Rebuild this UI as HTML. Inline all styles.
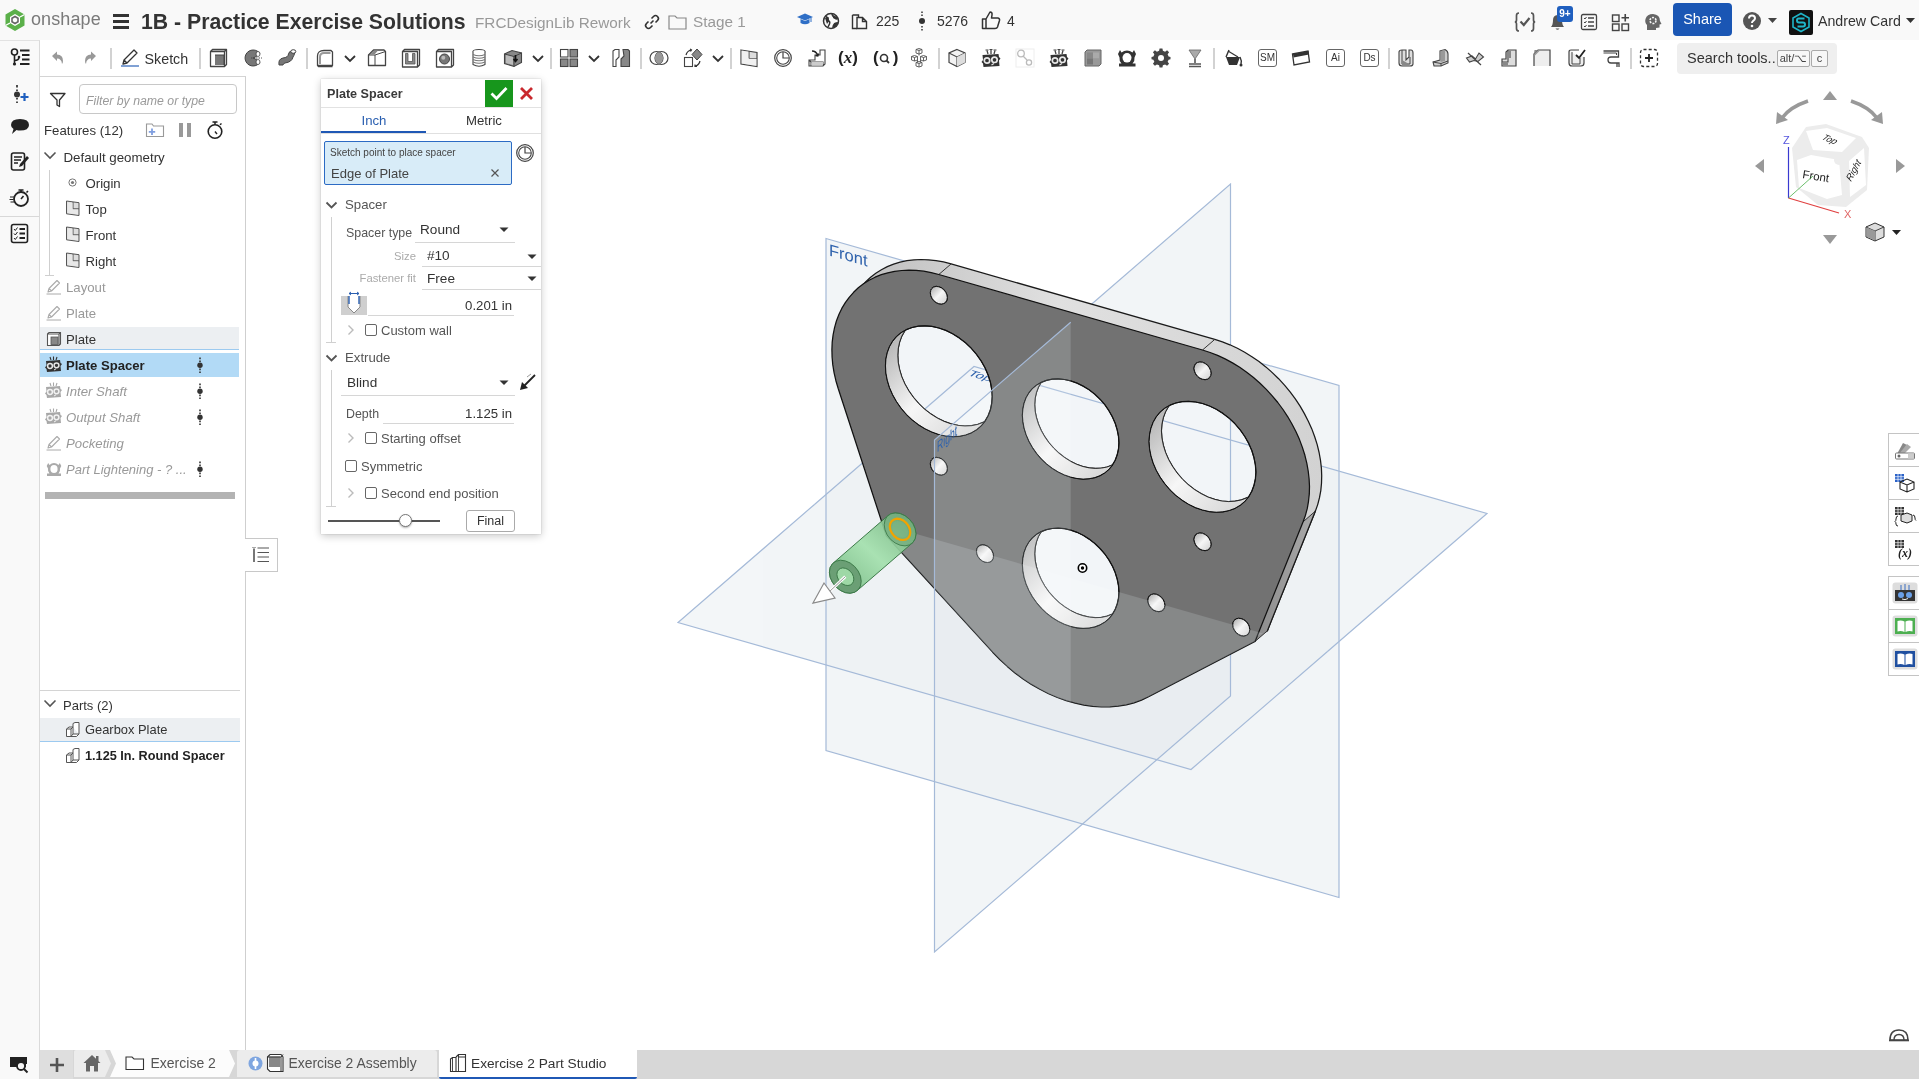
<!DOCTYPE html>
<html><head><meta charset="utf-8">
<style>
*{box-sizing:border-box}
html,body{margin:0;padding:0}
body{width:1919px;height:1079px;overflow:hidden;position:relative;background:#fff;font-family:"Liberation Sans",sans-serif;color:#333}
.a{position:absolute}
.t{position:absolute;white-space:nowrap;line-height:1}
svg{position:absolute;overflow:visible}
#hdr{left:0;top:0;width:1919px;height:40px;background:#f9f9f9}
#lcol{left:0;top:40px;width:40px;height:1039px;background:#f9f9f9;border-right:1px solid #dadada;border-top:1px solid #e2e2e2}
#tb{left:40px;top:40px;width:1879px;height:37px;background:#fff}
#fp{left:40px;top:76px;width:206px;height:974px;background:#fff;border-right:1px solid #cfcfcf;border-top:1px solid #d4d4d4}
#tabs{left:40px;top:1050px;width:1879px;height:29px;background:#d7d7d7}
.sep{position:absolute;top:48px;width:2px;height:21px;background:#d2d2d2}
.row{position:absolute;left:40px;width:199px;height:24px}
.ft{font-size:13.5px;color:#333}
.gray{color:#999}
.it{font-style:italic}
</style></head><body>
<div id="hdr" class="a">
<svg style="left:4px;top:8px" width="22" height="24" viewBox="0 0 22 24"><path d="M11 1 L20.5 6.5 L20.5 17.5 L11 23 L1.5 17.5 L1.5 6.5 Z" fill="#5bb04a"/><path d="M11 6 L16 9 L16 15 L11 18 L6 15 L6 9 Z" fill="#fff"/><path d="M11 8.5 L14 10.3 L14 13.8 L11 15.5 L8 13.8 L8 10.3 Z" fill="none" stroke="#666" stroke-width="1.6"/><path d="M16 9 L20.5 6.5 M6 15 L1.5 17.5" stroke="#fff" stroke-width="1.4"/></svg>
<div class="t" style="left:31px;top:10px;font-size:18px;color:#7a7a7a;letter-spacing:0.1px">onshape</div>
<div class="a" style="left:113px;top:14px;width:16px;height:3px;background:#333"></div>
<div class="a" style="left:113px;top:20px;width:16px;height:3px;background:#333"></div>
<div class="a" style="left:113px;top:26px;width:16px;height:3px;background:#333"></div>
<div class="t" style="left:141px;top:11px;font-size:22.6px;font-weight:bold;color:#333;transform:scaleX(0.94);transform-origin:0 0">1B - Practice Exercise Solutions</div>
<div class="t" style="left:475px;top:15px;font-size:15.3px;color:#999">FRCDesignLib Rework</div>
<svg style="left:644px;top:14px" width="16" height="16" viewBox="0 0 16 16"><path d="M6.5 9.5 L9.5 6.5" stroke="#333" stroke-width="1.6"/><path d="M7.5 4.5 L9.5 2.5 A2.3 2.3 0 0 1 13.5 6.5 L11.5 8.5 M8.5 11.5 L6.5 13.5 A2.3 2.3 0 0 1 2.5 9.5 L4.5 7.5" fill="none" stroke="#333" stroke-width="1.6"/></svg>
<svg style="left:668px;top:14px" width="19" height="16" viewBox="0 0 19 16"><path d="M1 2 H7 L9 4 H18 V15 H1 Z" fill="none" stroke="#888" stroke-width="1.2"/></svg>
<div class="t" style="left:693px;top:14px;font-size:15.3px;color:#999">Stage 1</div>
<svg style="left:796px;top:12px" width="18" height="16" viewBox="0 0 18 16"><path d="M1 5 L9 1.5 L17 5 L9 8.5 Z" fill="#2f6fc6"/><path d="M4.5 7 V11 Q9 13.5 13.5 11 V7 L9 9 Z" fill="#2f6fc6"/><path d="M15 5.5 V10" stroke="#2f6fc6" stroke-width="1"/></svg>
<svg style="left:822px;top:12px" width="18" height="18" viewBox="0 0 18 18"><circle cx="9" cy="9" r="7.5" fill="none" stroke="#333" stroke-width="1.5"/><path d="M4 4.5 Q6.5 6 6 8.5 Q8.5 9.5 7.5 12 L6 15 M10 2 Q10.5 5 13 5.5 L15.5 7 M11 16 Q11 12.5 13.5 11.5 L16 11" fill="none" stroke="#333" stroke-width="1.5"/><path d="M3 6 L6.5 5 L7 9 L5 12 Z M11 3 L15 5 L14.5 8 L11 6 Z M12 11 L16 10 L14 15 L11.5 15 Z" fill="#333"/></svg>
<svg style="left:851px;top:12px" width="17" height="18" viewBox="0 0 17 18"><path d="M1.5 3 H7.5 V5 M1.5 3 V16.5 H6" fill="none" stroke="#333" stroke-width="1.4"/><path d="M6 5.5 H11.5 L15.5 9.5 V16.5 H6 Z M11.5 5.5 V9.5 H15.5" fill="none" stroke="#333" stroke-width="1.4"/></svg>
<div class="t" style="left:876px;top:14px;font-size:14px;color:#333">225</div>
<svg style="left:918px;top:11px" width="8" height="20" viewBox="0 0 8 20"><circle cx="4" cy="10" r="3" fill="#333"/><path d="M4 0.5 V5 M4 15 V19.5" stroke="#333" stroke-width="1.5" stroke-dasharray="1.6 1.4"/></svg>
<div class="t" style="left:937px;top:14px;font-size:14px;color:#333">5276</div>
<svg style="left:981px;top:10px" width="20" height="20" viewBox="0 0 20 20"><path d="M1.5 9 H5 V18.5 H1.5 Z M5 9 L9 2 Q11.5 2 11 5 L10.5 8 H17 Q19 8.5 18.5 10.5 L16.5 17 Q16 18.5 14 18.5 H5" fill="none" stroke="#333" stroke-width="1.5" stroke-linejoin="round"/></svg>
<div class="t" style="left:1007px;top:14px;font-size:14px;color:#333">4</div>
<svg style="left:1514px;top:12px" width="22" height="20" viewBox="0 0 22 20"><path d="M5 1 Q2.5 1 2.5 3.5 V8 Q2.5 10 0.8 10 Q2.5 10 2.5 12 V16.5 Q2.5 19 5 19 M17 1 Q19.5 1 19.5 3.5 V8 Q19.5 10 21.2 10 Q19.5 10 19.5 12 V16.5 Q19.5 19 17 19" fill="none" stroke="#555" stroke-width="1.7"/><path d="M6.5 9.5 L9.8 13 L15.5 6" fill="none" stroke="#555" stroke-width="2.2"/></svg>
<svg style="left:1548px;top:12px" width="20" height="20" viewBox="0 0 20 20"><path d="M3 15 Q5 13 5 8 Q5 3.5 9.5 3 Q14 3.5 14 8 Q14 13 16 15 Z" fill="#555"/><path d="M7.5 16.5 Q9.5 19 11.5 16.5" fill="#555"/></svg>
<div class="a" style="left:1557px;top:6px;width:16px;height:16px;background:#1f5fbf;border-radius:3px;color:#fff;font-size:10px;font-weight:bold;text-align:center;line-height:16px">9+</div>
<svg style="left:1580px;top:13px" width="18" height="18" viewBox="0 0 18 18"><rect x="1.5" y="1.5" width="15" height="15" rx="1.5" fill="none" stroke="#444" stroke-width="1.3"/><path d="M4 5 L5 6 L6.5 4 M4 9 L5 10 L6.5 8 M4 13 L5 14 L6.5 12" fill="none" stroke="#444" stroke-width="1"/><path d="M8 5 H14 M8 9 H14 M8 13 H14" stroke="#444" stroke-width="1.4"/></svg>
<svg style="left:1611px;top:12px" width="20" height="20" viewBox="0 0 20 20"><rect x="1.5" y="3" width="6.5" height="6.5" fill="none" stroke="#444" stroke-width="1.4"/><rect x="1.5" y="12" width="6.5" height="6.5" fill="none" stroke="#444" stroke-width="1.4"/><rect x="11" y="12" width="6.5" height="6.5" fill="none" stroke="#444" stroke-width="1.4"/><path d="M14.25 2 V9.5 M10.5 5.75 H18" stroke="#444" stroke-width="1.6"/></svg>
<svg style="left:1643px;top:12px" width="20" height="20" viewBox="0 0 20 20"><path d="M4 18 V13 Q1.5 10.5 2.5 7 Q4 2 10 2 Q17 2.5 17 9 L18.5 12 L16.5 12.5 V15.5 L13 16 V18 Z" fill="#666"/><circle cx="10" cy="8.5" r="3" fill="none" stroke="#f6f6f6" stroke-width="1.6" stroke-dasharray="2 1.2"/></svg>
<div class="a" style="left:1673px;top:3px;width:59px;height:33px;background:#1a56b4;border-radius:4px;color:#fff;font-size:14.5px;text-align:center;line-height:33px">Share</div>
<svg style="left:1742px;top:11px" width="20" height="20" viewBox="0 0 20 20"><circle cx="10" cy="10" r="9" fill="#555"/><path d="M7 7.5 Q7 4.5 10 4.5 Q13 4.5 13 7.3 Q13 9 11 10 Q10 10.6 10 12" fill="none" stroke="#fff" stroke-width="2"/><circle cx="10" cy="15" r="1.3" fill="#fff"/></svg>
<svg style="left:1768px;top:18px" width="9" height="6" viewBox="0 0 9 6"><path d="M0 0 H9 L4.5 5 Z" fill="#444"/></svg>
<div class="a" style="left:1789px;top:10px;width:24px;height:25px;background:#111;border-radius:2px"></div>
<svg style="left:1791px;top:12px" width="20" height="21" viewBox="0 0 20 21"><path d="M10 1.5 L18 6 V15 L10 19.5 L2 15 V6 Z" fill="none" stroke="#1fb5c8" stroke-width="1.6"/><path d="M13.5 6.5 H7.5 Q6 6.5 6 8.5 Q6 10.5 8 10.5 H12 Q14 10.5 14 12.5 Q14 14.5 12 14.5 H6.5" fill="none" stroke="#1fb5c8" stroke-width="2"/></svg>
<div class="t" style="left:1818px;top:14px;font-size:14.2px;color:#333">Andrew Card</div>
<svg style="left:1906px;top:18px" width="9" height="6" viewBox="0 0 9 6"><path d="M0 0 H9 L4.5 5 Z" fill="#333"/></svg>
</div>
<div id="lcol" class="a"></div>
<div id="tb" class="a"></div>
<div id="fp" class="a"></div>
<div id="tabs" class="a"></div>
<svg class="a" style="left:0;top:0" width="1919" height="1079" viewBox="0 0 1919 1079">
<defs>
<linearGradient id="wall" x1="0" y1="0" x2="1" y2="1"><stop offset="0" stop-color="#a8a8a8"/><stop offset="0.5" stop-color="#f6f6f6"/><stop offset="1" stop-color="#d0d0d0"/></linearGradient>
<linearGradient id="side" x1="0" y1="0" x2="1" y2="0"><stop offset="0" stop-color="#bcbcbc"/><stop offset="0.45" stop-color="#e0e0e0"/><stop offset="1" stop-color="#d2d2d2"/></linearGradient>
<linearGradient id="sp" x1="0" y1="1" x2="1" y2="0"><stop offset="0" stop-color="#6fb37c"/><stop offset="0.5" stop-color="#a3e0ad"/><stop offset="1" stop-color="#6fae7a"/></linearGradient>
</defs>
<clipPath id="sil"><path d="M1202.5,350 L1210.1,352.5 L1217.6,355.4 L1225.1,358.9 L1232.5,362.9 L1239.7,367.3 L1246.7,372.2 L1253.5,377.5 L1260,383.3 L1266.3,389.4 L1272.2,395.8 L1277.8,402.5 L1283,409.5 L1287.8,416.8 L1292.1,424.2 L1296,431.8 L1299.5,439.6 L1302.4,447.4 L1304.9,455.3 L1306.8,463.1 L1308.2,471 L1309.1,478.8 L1309.5,486.4 L1309.3,493.9 L1308.5,501.3 L1307.3,508.4 L1305.5,515.2 L1303.1,521.8 L1255,641.5 L1148.6,696.8 L1141.5,700.1 L1134.1,702.8 L1126.3,704.8 L1118.2,706.2 L1109.9,706.9 L1101.4,707 L1092.7,706.4 L1083.9,705.1 L1075.1,703.2 L1066.2,700.7 L1057.4,697.5 L1048.6,693.7 L1039.9,689.3 L1031.4,684.4 L1023.1,678.9 L1015,672.9 L1007.3,666.4 L999.8,659.5 L992.7,652.2 L886.3,535.9 L838.2,388.5 L835.9,380.7 L834.1,372.8 L832.8,364.9 L832.1,357.2 L831.9,349.6 L832.2,342.1 L833.1,334.8 L834.5,327.8 L836.4,321 L838.9,314.6 L841.8,308.4 L845.3,302.7 L849.2,297.3 L853.6,292.3 L858.3,287.8 L863.5,283.8 L869.1,280.3 L875.1,277.2 L881.3,274.7 L887.8,272.8 L894.6,271.3 L901.7,270.5 L908.9,270.2 L916.2,270.4 L923.7,271.2 L931.2,272.6 L938.8,274.5Z"/><path d="M1214.8,339.4 L1222.4,341.9 L1229.9,344.8 L1237.4,348.3 L1244.7,352.3 L1251.9,356.7 L1259,361.6 L1265.8,366.9 L1272.3,372.6 L1278.6,378.7 L1284.5,385.2 L1290.1,391.9 L1295.3,398.9 L1300.1,406.1 L1304.4,413.6 L1308.3,421.2 L1311.8,428.9 L1314.7,436.8 L1317.2,444.6 L1319.1,452.5 L1320.5,460.4 L1321.4,468.1 L1321.7,475.8 L1321.5,483.3 L1320.8,490.6 L1319.5,497.7 L1317.7,504.6 L1315.4,511.1 L1267.3,630.9 L1160.9,686.2 L1153.8,689.5 L1146.3,692.2 L1138.6,694.2 L1130.5,695.6 L1122.2,696.3 L1113.7,696.3 L1105,695.7 L1096.2,694.5 L1087.4,692.6 L1078.5,690 L1069.7,686.9 L1060.9,683.1 L1052.2,678.7 L1043.7,673.8 L1035.4,668.3 L1027.3,662.3 L1019.5,655.8 L1012.1,648.9 L1005,641.5 L898.6,525.2 L850.5,377.9 L848.1,370 L846.3,362.2 L845.1,354.3 L844.3,346.6 L844.1,338.9 L844.5,331.5 L845.4,324.2 L846.8,317.2 L848.7,310.4 L851.2,303.9 L854.1,297.8 L857.6,292 L861.5,286.7 L865.8,281.7 L870.6,277.2 L875.8,273.2 L881.4,269.7 L887.3,266.6 L893.6,264.1 L900.1,262.1 L906.9,260.7 L913.9,259.9 L921.1,259.5 L928.5,259.8 L936,260.6 L943.5,261.9 L951.1,263.9Z"/></clipPath>
<mask id="nosil" maskUnits="userSpaceOnUse" x="0" y="0" width="1919" height="1079"><rect x="0" y="0" width="1919" height="1079" fill="#fff"/><path d="M1202.5,350 L1210.1,352.5 L1217.6,355.4 L1225.1,358.9 L1232.5,362.9 L1239.7,367.3 L1246.7,372.2 L1253.5,377.5 L1260,383.3 L1266.3,389.4 L1272.2,395.8 L1277.8,402.5 L1283,409.5 L1287.8,416.8 L1292.1,424.2 L1296,431.8 L1299.5,439.6 L1302.4,447.4 L1304.9,455.3 L1306.8,463.1 L1308.2,471 L1309.1,478.8 L1309.5,486.4 L1309.3,493.9 L1308.5,501.3 L1307.3,508.4 L1305.5,515.2 L1303.1,521.8 L1255,641.5 L1148.6,696.8 L1141.5,700.1 L1134.1,702.8 L1126.3,704.8 L1118.2,706.2 L1109.9,706.9 L1101.4,707 L1092.7,706.4 L1083.9,705.1 L1075.1,703.2 L1066.2,700.7 L1057.4,697.5 L1048.6,693.7 L1039.9,689.3 L1031.4,684.4 L1023.1,678.9 L1015,672.9 L1007.3,666.4 L999.8,659.5 L992.7,652.2 L886.3,535.9 L838.2,388.5 L835.9,380.7 L834.1,372.8 L832.8,364.9 L832.1,357.2 L831.9,349.6 L832.2,342.1 L833.1,334.8 L834.5,327.8 L836.4,321 L838.9,314.6 L841.8,308.4 L845.3,302.7 L849.2,297.3 L853.6,292.3 L858.3,287.8 L863.5,283.8 L869.1,280.3 L875.1,277.2 L881.3,274.7 L887.8,272.8 L894.6,271.3 L901.7,270.5 L908.9,270.2 L916.2,270.4 L923.7,271.2 L931.2,272.6 L938.8,274.5Z" fill="#000"/><path d="M1214.8,339.4 L1222.4,341.9 L1229.9,344.8 L1237.4,348.3 L1244.7,352.3 L1251.9,356.7 L1259,361.6 L1265.8,366.9 L1272.3,372.6 L1278.6,378.7 L1284.5,385.2 L1290.1,391.9 L1295.3,398.9 L1300.1,406.1 L1304.4,413.6 L1308.3,421.2 L1311.8,428.9 L1314.7,436.8 L1317.2,444.6 L1319.1,452.5 L1320.5,460.4 L1321.4,468.1 L1321.7,475.8 L1321.5,483.3 L1320.8,490.6 L1319.5,497.7 L1317.7,504.6 L1315.4,511.1 L1267.3,630.9 L1160.9,686.2 L1153.8,689.5 L1146.3,692.2 L1138.6,694.2 L1130.5,695.6 L1122.2,696.3 L1113.7,696.3 L1105,695.7 L1096.2,694.5 L1087.4,692.6 L1078.5,690 L1069.7,686.9 L1060.9,683.1 L1052.2,678.7 L1043.7,673.8 L1035.4,668.3 L1027.3,662.3 L1019.5,655.8 L1012.1,648.9 L1005,641.5 L898.6,525.2 L850.5,377.9 L848.1,370 L846.3,362.2 L845.1,354.3 L844.3,346.6 L844.1,338.9 L844.5,331.5 L845.4,324.2 L846.8,317.2 L848.7,310.4 L851.2,303.9 L854.1,297.8 L857.6,292 L861.5,286.7 L865.8,281.7 L870.6,277.2 L875.8,273.2 L881.4,269.7 L887.3,266.6 L893.6,264.1 L900.1,262.1 L906.9,260.7 L913.9,259.9 L921.1,259.5 L928.5,259.8 L936,260.6 L943.5,261.9 L951.1,263.9Z" fill="#000"/></mask>
<g mask="url(#nosil)">
<path d="M826,238.5 L1339,385.5 L1339,897.5 L826,750.5Z" fill="rgba(185,205,215,0.09)"/>
<path d="M678,622.5 L1191,769.5 L1487,513.5 L974,366.5Z" fill="rgba(185,205,215,0.09)"/>
<path d="M934.5,440 L1230.5,184 L1230.5,696 L934.5,952Z" fill="rgba(185,205,215,0.09)"/>
<g opacity="0.1">
<path d="M826,238.5 L1339,385.5 L1339,897.5 L826,750.5Z" fill="rgb(185,205,215)"/>
<path d="M678,622.5 L1191,769.5 L1487,513.5 L974,366.5Z" fill="rgb(185,205,215)"/>
<path d="M934.5,440 L1230.5,184 L1230.5,696 L934.5,952Z" fill="rgb(185,205,215)"/>
</g></g>
<g clip-path="url(#sil)"><g opacity="0.2">
<path d="M826,238.5 L1339,385.5 L1339,897.5 L826,750.5Z" fill="rgb(190,206,218)"/>
<path d="M678,622.5 L1191,769.5 L1487,513.5 L974,366.5Z" fill="rgb(190,206,218)"/>
<path d="M934.5,440 L1230.5,184 L1230.5,696 L934.5,952Z" fill="rgb(190,206,218)"/>
</g></g>
<path d="M826,238.5 L1339,385.5 L1339,897.5 L826,750.5Z" fill="none" stroke="#a5bad8" stroke-width="1.2"/>
<path d="M814.2,504.7 L974,366.5 L1487,513.5 L1327.2,651.7" fill="none" stroke="#a5bad8" stroke-width="1.2"/>
<path d="M1070.7,322.2 L1230.5,184 L1230.5,696 L1070.7,834.2" fill="none" stroke="#a5bad8" stroke-width="1.2"/>
<text x="0" y="0" transform="matrix(1.002,0.287,0,1,829,255.4)" font-size="16.5" fill="#3063ad" font-family="Liberation Sans">Front</text>
<text x="0" y="0" transform="matrix(1.002,0.287,-0.578,0.5,966.8,375)" font-size="14" fill="#3063ad" font-family="Liberation Sans">Top</text>
<path d="M1214.8,339.4 L1222.4,341.9 L1229.9,344.8 L1237.4,348.3 L1244.7,352.3 L1251.9,356.7 L1259,361.6 L1265.8,366.9 L1272.3,372.6 L1278.6,378.7 L1284.5,385.2 L1290.1,391.9 L1295.3,398.9 L1300.1,406.1 L1304.4,413.6 L1308.3,421.2 L1311.8,428.9 L1314.7,436.8 L1317.2,444.6 L1319.1,452.5 L1320.5,460.4 L1321.4,468.1 L1321.7,475.8 L1321.5,483.3 L1320.8,490.6 L1319.5,497.7 L1317.7,504.6 L1315.4,511.1 L1267.3,630.9 L1160.9,686.2 L1153.8,689.5 L1146.3,692.2 L1138.6,694.2 L1130.5,695.6 L1122.2,696.3 L1113.7,696.3 L1105,695.7 L1096.2,694.5 L1087.4,692.6 L1078.5,690 L1069.7,686.9 L1060.9,683.1 L1052.2,678.7 L1043.7,673.8 L1035.4,668.3 L1027.3,662.3 L1019.5,655.8 L1012.1,648.9 L1005,641.5 L898.6,525.2 L850.5,377.9 L848.1,370 L846.3,362.2 L845.1,354.3 L844.3,346.6 L844.1,338.9 L844.5,331.5 L845.4,324.2 L846.8,317.2 L848.7,310.4 L851.2,303.9 L854.1,297.8 L857.6,292 L861.5,286.7 L865.8,281.7 L870.6,277.2 L875.8,273.2 L881.4,269.7 L887.3,266.6 L893.6,264.1 L900.1,262.1 L906.9,260.7 L913.9,259.9 L921.1,259.5 L928.5,259.8 L936,260.6 L943.5,261.9 L951.1,263.9ZM1004.5,385.9 L1004,378.8 L1002.6,371.6 L1000.4,364.4 L997.3,357.2 L993.4,350.3 L988.8,343.8 L983.6,337.7 L977.8,332.1 L971.5,327.3 L964.9,323.1 L958.1,319.8 L951.1,317.4 L944.1,315.8 L937.3,315.2 L930.7,315.6 L924.4,316.8 L918.6,319.1 L913.4,322.1 L908.8,326.1 L904.9,330.7 L901.8,336.1 L899.6,342.1 L898.2,348.5 L897.8,355.3 L898.2,362.4 L899.6,369.6 L901.8,376.9 L904.9,384 L908.8,390.9 L913.4,397.4 L918.6,403.5 L924.4,409.1 L930.7,413.9 L937.3,418.1 L944.1,421.4 L951.1,423.9 L958.1,425.4 L964.9,426 L971.5,425.7 L977.8,424.4 L983.6,422.2 L988.8,419.1 L993.4,415.1 L997.3,410.5 L1000.4,405.1 L1002.6,399.2 L1004,392.7ZM1131.2,432.2 L1130.8,425.8 L1129.5,419.3 L1127.5,412.7 L1124.7,406.3 L1121.2,400 L1117,394.1 L1112.3,388.6 L1107.1,383.6 L1101.4,379.2 L1095.4,375.5 L1089.2,372.5 L1082.9,370.2 L1076.6,368.8 L1070.5,368.3 L1064.5,368.6 L1058.8,369.8 L1053.6,371.8 L1048.8,374.6 L1044.7,378.1 L1041.2,382.3 L1038.4,387.2 L1036.4,392.6 L1035.1,398.4 L1034.7,404.6 L1035.1,411 L1036.4,417.5 L1038.4,424 L1041.2,430.5 L1044.7,436.7 L1048.8,442.6 L1053.6,448.1 L1058.8,453.1 L1064.5,457.5 L1070.5,461.3 L1076.6,464.3 L1082.9,466.5 L1089.2,467.9 L1095.4,468.4 L1101.4,468.1 L1107.1,467 L1112.3,465 L1117,462.2 L1121.2,458.6 L1124.7,454.4 L1127.5,449.6 L1129.5,444.2 L1130.8,438.3ZM1268.1,461.5 L1267.7,454.4 L1266.3,447.1 L1264.1,439.9 L1261,432.8 L1257.1,425.9 L1252.5,419.3 L1247.3,413.2 L1241.5,407.7 L1235.2,402.8 L1228.6,398.7 L1221.7,395.4 L1214.8,392.9 L1207.8,391.4 L1201,390.8 L1194.4,391.1 L1188.1,392.4 L1182.3,394.6 L1177.1,397.7 L1172.5,401.6 L1168.6,406.3 L1165.5,411.7 L1163.3,417.6 L1161.9,424.1 L1161.4,430.9 L1161.9,438 L1163.3,445.2 L1165.5,452.4 L1168.6,459.5 L1172.5,466.4 L1177.1,473 L1182.3,479.1 L1188.1,484.6 L1194.4,489.5 L1201,493.6 L1207.8,497 L1214.8,499.4 L1221.7,501 L1228.6,501.6 L1235.2,501.2 L1241.5,499.9 L1247.3,497.7 L1252.5,494.6 L1257.1,490.7 L1261,486 L1264.1,480.7 L1266.3,474.7 L1267.7,468.3ZM1131.2,581.4 L1130.8,575 L1129.5,568.5 L1127.5,562 L1124.7,555.5 L1121.2,549.3 L1117,543.4 L1112.3,537.8 L1107.1,532.8 L1101.4,528.4 L1095.4,524.7 L1089.2,521.7 L1082.9,519.5 L1076.6,518.1 L1070.5,517.6 L1064.5,517.9 L1058.8,519 L1053.6,521 L1048.8,523.8 L1044.7,527.4 L1041.2,531.6 L1038.4,536.4 L1036.4,541.8 L1035.1,547.6 L1034.7,553.8 L1035.1,560.2 L1036.4,566.7 L1038.4,573.3 L1041.2,579.7 L1044.7,586 L1048.8,591.9 L1053.6,597.4 L1058.8,602.4 L1064.5,606.8 L1070.5,610.5 L1076.6,613.5 L1082.9,615.7 L1089.2,617.1 L1095.4,617.7 L1101.4,617.4 L1107.1,616.2 L1112.3,614.2 L1117,611.4 L1121.2,607.9 L1124.7,603.6 L1127.5,598.8 L1129.5,593.4 L1130.8,587.6Z" fill="url(#side)" fill-rule="evenodd" stroke="#1a1a1a" stroke-width="1.25" stroke-linejoin="round"/>
<defs><linearGradient id="rs" x1="0" y1="0" x2="1" y2="0"><stop offset="0" stop-color="#8c8c8c"/><stop offset="1" stop-color="#a9a9a9"/></linearGradient></defs>
<path d="M1303.1,521.8 L1255,641.5 L1267.3,630.9 L1315.4,511.1Z" fill="url(#rs)"/>
<path d="M1315.4,511.1 L1267.3,630.9" stroke="#1a1a1a" stroke-width="1.25"/>
<path d="M938.8,274.5 L951.1,263.9" stroke="#333" stroke-width="1"/>
<path d="M1202.5,350 L1214.8,339.4" stroke="#333" stroke-width="1"/>
<path d="M1255,641.5 L1267.3,630.9" stroke="#333" stroke-width="1"/>
<path d="M1303.1,521.8 L1315.4,511.1" stroke="#333" stroke-width="1"/>
<path d="M1202.5,350 L1210.1,352.5 L1217.6,355.4 L1225.1,358.9 L1232.5,362.9 L1239.7,367.3 L1246.7,372.2 L1253.5,377.5 L1260,383.3 L1266.3,389.4 L1272.2,395.8 L1277.8,402.5 L1283,409.5 L1287.8,416.8 L1292.1,424.2 L1296,431.8 L1299.5,439.6 L1302.4,447.4 L1304.9,455.3 L1306.8,463.1 L1308.2,471 L1309.1,478.8 L1309.5,486.4 L1309.3,493.9 L1308.5,501.3 L1307.3,508.4 L1305.5,515.2 L1303.1,521.8 L1255,641.5 L1148.6,696.8 L1141.5,700.1 L1134.1,702.8 L1126.3,704.8 L1118.2,706.2 L1109.9,706.9 L1101.4,707 L1092.7,706.4 L1083.9,705.1 L1075.1,703.2 L1066.2,700.7 L1057.4,697.5 L1048.6,693.7 L1039.9,689.3 L1031.4,684.4 L1023.1,678.9 L1015,672.9 L1007.3,666.4 L999.8,659.5 L992.7,652.2 L886.3,535.9 L838.2,388.5 L835.9,380.7 L834.1,372.8 L832.8,364.9 L832.1,357.2 L831.9,349.6 L832.2,342.1 L833.1,334.8 L834.5,327.8 L836.4,321 L838.9,314.6 L841.8,308.4 L845.3,302.7 L849.2,297.3 L853.6,292.3 L858.3,287.8 L863.5,283.8 L869.1,280.3 L875.1,277.2 L881.3,274.7 L887.8,272.8 L894.6,271.3 L901.7,270.5 L908.9,270.2 L916.2,270.4 L923.7,271.2 L931.2,272.6 L938.8,274.5ZM992.2,396.5 L991.7,389.4 L990.4,382.2 L988.1,375 L985,367.8 L981.1,360.9 L976.5,354.4 L971.3,348.3 L965.5,342.8 L959.2,337.9 L952.6,333.8 L945.8,330.4 L938.8,328 L931.9,326.4 L925,325.8 L918.4,326.2 L912.1,327.5 L906.3,329.7 L901.1,332.8 L896.5,336.7 L892.6,341.4 L889.5,346.7 L887.3,352.7 L885.9,359.1 L885.5,365.9 L885.9,373 L887.3,380.2 L889.5,387.5 L892.6,394.6 L896.5,401.5 L901.1,408.1 L906.3,414.2 L912.1,419.7 L918.4,424.6 L925,428.7 L931.9,432 L938.8,434.5 L945.8,436 L952.6,436.6 L959.2,436.3 L965.5,435 L971.3,432.8 L976.5,429.7 L981.1,425.8 L985,421.1 L988.1,415.7 L990.4,409.8 L991.7,403.3ZM1118.9,442.8 L1118.5,436.4 L1117.2,429.9 L1115.2,423.3 L1112.4,416.9 L1108.9,410.7 L1104.8,404.7 L1100,399.2 L1094.8,394.2 L1089.1,389.8 L1083.1,386.1 L1077,383.1 L1070.7,380.9 L1064.4,379.5 L1058.2,378.9 L1052.2,379.2 L1046.5,380.4 L1041.3,382.4 L1036.6,385.2 L1032.4,388.7 L1028.9,393 L1026.1,397.8 L1024.1,403.2 L1022.9,409 L1022.4,415.2 L1022.9,421.6 L1024.1,428.1 L1026.1,434.6 L1028.9,441.1 L1032.4,447.3 L1036.6,453.3 L1041.3,458.8 L1046.5,463.8 L1052.2,468.2 L1058.2,471.9 L1064.4,474.9 L1070.7,477.1 L1077,478.5 L1083.1,479.1 L1089.1,478.7 L1094.8,477.6 L1100,475.6 L1104.8,472.8 L1108.9,469.3 L1112.4,465 L1115.2,460.2 L1117.2,454.8 L1118.5,449ZM1255.9,472.1 L1255.4,465 L1254,457.8 L1251.8,450.5 L1248.7,443.4 L1244.8,436.5 L1240.2,429.9 L1235,423.8 L1229.2,418.3 L1222.9,413.4 L1216.3,409.3 L1209.5,406 L1202.5,403.5 L1195.5,402 L1188.7,401.4 L1182.1,401.7 L1175.8,403 L1170,405.2 L1164.8,408.3 L1160.2,412.2 L1156.3,416.9 L1153.2,422.3 L1151,428.2 L1149.6,434.7 L1149.1,441.5 L1149.6,448.6 L1151,455.8 L1153.2,463 L1156.3,470.2 L1160.2,477.1 L1164.8,483.6 L1170,489.7 L1175.8,495.3 L1182.1,500.1 L1188.7,504.3 L1195.5,507.6 L1202.5,510 L1209.5,511.6 L1216.3,512.2 L1222.9,511.8 L1229.2,510.5 L1235,508.3 L1240.2,505.2 L1244.8,501.3 L1248.7,496.7 L1251.8,491.3 L1254,485.3 L1255.4,478.9ZM1118.9,592.1 L1118.5,585.7 L1117.2,579.1 L1115.2,572.6 L1112.4,566.1 L1108.9,559.9 L1104.8,554 L1100,548.5 L1094.8,543.5 L1089.1,539.1 L1083.1,535.3 L1077,532.3 L1070.7,530.1 L1064.4,528.7 L1058.2,528.2 L1052.2,528.5 L1046.5,529.7 L1041.3,531.6 L1036.6,534.4 L1032.4,538 L1028.9,542.2 L1026.1,547.1 L1024.1,552.4 L1022.9,558.3 L1022.4,564.4 L1022.9,570.8 L1024.1,577.3 L1026.1,583.9 L1028.9,590.3 L1032.4,596.6 L1036.6,602.5 L1041.3,608 L1046.5,613 L1052.2,617.4 L1058.2,621.2 L1064.4,624.2 L1070.7,626.4 L1077,627.8 L1083.1,628.3 L1089.1,628 L1094.8,626.8 L1100,624.8 L1104.8,622 L1108.9,618.5 L1112.4,614.3 L1115.2,609.4 L1117.2,604 L1118.5,598.2ZM947.3,297.6 L946.9,294.9 L945.7,292.2 L943.8,289.8 L941.4,287.9 L938.8,286.8 L936.2,286.4 L933.8,287 L932,288.3 L930.8,290.3 L930.4,292.8 L930.8,295.5 L932,298.2 L933.8,300.6 L936.2,302.5 L938.8,303.7 L941.4,304 L943.8,303.5 L945.7,302.1 L946.9,300.1ZM1211,373.2 L1210.6,370.5 L1209.3,367.8 L1207.5,365.4 L1205.1,363.5 L1202.5,362.3 L1199.9,362 L1197.5,362.5 L1195.7,363.8 L1194.5,365.9 L1194,368.3 L1194.5,371.1 L1195.7,373.8 L1197.5,376.2 L1199.9,378.1 L1202.5,379.2 L1205.1,379.6 L1207.5,379 L1209.3,377.7 L1210.6,375.7ZM947.3,468.6 L946.9,465.9 L945.7,463.2 L943.8,460.8 L941.4,458.9 L938.8,457.8 L936.2,457.4 L933.8,458 L932,459.3 L930.8,461.3 L930.4,463.8 L930.8,466.5 L932,469.2 L933.8,471.6 L936.2,473.5 L938.8,474.7 L941.4,475 L943.8,474.5 L945.7,473.1 L946.9,471.1ZM1211,544.2 L1210.6,541.5 L1209.3,538.8 L1207.5,536.4 L1205.1,534.5 L1202.5,533.3 L1199.9,533 L1197.5,533.5 L1195.7,534.9 L1194.5,536.9 L1194,539.4 L1194.5,542.1 L1195.7,544.8 L1197.5,547.2 L1199.9,549.1 L1202.5,550.2 L1205.1,550.6 L1207.5,550 L1209.3,548.7 L1210.6,546.7ZM993.5,556.1 L993,553.4 L991.8,550.7 L990,548.3 L987.6,546.4 L985,545.2 L982.4,544.9 L980,545.4 L978.1,546.8 L976.9,548.8 L976.5,551.3 L976.9,554 L978.1,556.7 L980,559.1 L982.4,561 L985,562.1 L987.6,562.5 L990,562 L991.8,560.6 L993,558.6ZM1164.8,605.2 L1164.4,602.5 L1163.2,599.8 L1161.3,597.4 L1158.9,595.5 L1156.3,594.3 L1153.7,594 L1151.4,594.5 L1149.5,595.9 L1148.3,597.9 L1147.9,600.4 L1148.3,603.1 L1149.5,605.8 L1151.4,608.2 L1153.7,610.1 L1156.3,611.2 L1158.9,611.6 L1161.3,611 L1163.2,609.7 L1164.4,607.7ZM1249.7,629.5 L1249.3,626.8 L1248.1,624.1 L1246.2,621.7 L1243.8,619.8 L1241.2,618.7 L1238.6,618.3 L1236.3,618.9 L1234.4,620.2 L1233.2,622.2 L1232.8,624.7 L1233.2,627.4 L1234.4,630.1 L1236.3,632.5 L1238.6,634.4 L1241.2,635.6 L1243.8,635.9 L1246.2,635.4 L1248.1,634 L1249.3,632ZM908.6,531.8 L908.1,529.1 L906.9,526.4 L905.1,524 L902.7,522.1 L900.1,520.9 L897.5,520.6 L895.1,521.1 L893.2,522.4 L892,524.4 L891.6,526.9 L892,529.7 L893.2,532.4 L895.1,534.8 L897.5,536.6 L900.1,537.8 L902.7,538.1 L905.1,537.6 L906.9,536.3 L908.1,534.3Z" fill="#727272" fill-rule="evenodd" stroke="#111" stroke-width="1.25" stroke-linejoin="round"/>
<mask id="m0" maskUnits="userSpaceOnUse" x="0" y="0" width="1919" height="1079"><path d="M992.2,396.5 L991.7,389.4 L990.4,382.2 L988.1,375 L985,367.8 L981.1,360.9 L976.5,354.4 L971.3,348.3 L965.5,342.8 L959.2,337.9 L952.6,333.8 L945.8,330.4 L938.8,328 L931.9,326.4 L925,325.8 L918.4,326.2 L912.1,327.5 L906.3,329.7 L901.1,332.8 L896.5,336.7 L892.6,341.4 L889.5,346.7 L887.3,352.7 L885.9,359.1 L885.5,365.9 L885.9,373 L887.3,380.2 L889.5,387.5 L892.6,394.6 L896.5,401.5 L901.1,408.1 L906.3,414.2 L912.1,419.7 L918.4,424.6 L925,428.7 L931.9,432 L938.8,434.5 L945.8,436 L952.6,436.6 L959.2,436.3 L965.5,435 L971.3,432.8 L976.5,429.7 L981.1,425.8 L985,421.1 L988.1,415.7 L990.4,409.8 L991.7,403.3Z" fill="#fff"/><path d="M1004.5,385.9 L1004,378.8 L1002.6,371.6 L1000.4,364.4 L997.3,357.2 L993.4,350.3 L988.8,343.8 L983.6,337.7 L977.8,332.1 L971.5,327.3 L964.9,323.1 L958.1,319.8 L951.1,317.4 L944.1,315.8 L937.3,315.2 L930.7,315.6 L924.4,316.8 L918.6,319.1 L913.4,322.1 L908.8,326.1 L904.9,330.7 L901.8,336.1 L899.6,342.1 L898.2,348.5 L897.8,355.3 L898.2,362.4 L899.6,369.6 L901.8,376.9 L904.9,384 L908.8,390.9 L913.4,397.4 L918.6,403.5 L924.4,409.1 L930.7,413.9 L937.3,418.1 L944.1,421.4 L951.1,423.9 L958.1,425.4 L964.9,426 L971.5,425.7 L977.8,424.4 L983.6,422.2 L988.8,419.1 L993.4,415.1 L997.3,410.5 L1000.4,405.1 L1002.6,399.2 L1004,392.7Z" fill="#000"/></mask>
<path d="M992.2,396.5 L991.7,389.4 L990.4,382.2 L988.1,375 L985,367.8 L981.1,360.9 L976.5,354.4 L971.3,348.3 L965.5,342.8 L959.2,337.9 L952.6,333.8 L945.8,330.4 L938.8,328 L931.9,326.4 L925,325.8 L918.4,326.2 L912.1,327.5 L906.3,329.7 L901.1,332.8 L896.5,336.7 L892.6,341.4 L889.5,346.7 L887.3,352.7 L885.9,359.1 L885.5,365.9 L885.9,373 L887.3,380.2 L889.5,387.5 L892.6,394.6 L896.5,401.5 L901.1,408.1 L906.3,414.2 L912.1,419.7 L918.4,424.6 L925,428.7 L931.9,432 L938.8,434.5 L945.8,436 L952.6,436.6 L959.2,436.3 L965.5,435 L971.3,432.8 L976.5,429.7 L981.1,425.8 L985,421.1 L988.1,415.7 L990.4,409.8 L991.7,403.3Z" fill="url(#wall)" mask="url(#m0)"/>
<path d="M992.2,396.5 L991.7,389.4 L990.4,382.2 L988.1,375 L985,367.8 L981.1,360.9 L976.5,354.4 L971.3,348.3 L965.5,342.8 L959.2,337.9 L952.6,333.8 L945.8,330.4 L938.8,328 L931.9,326.4 L925,325.8 L918.4,326.2 L912.1,327.5 L906.3,329.7 L901.1,332.8 L896.5,336.7 L892.6,341.4 L889.5,346.7 L887.3,352.7 L885.9,359.1 L885.5,365.9 L885.9,373 L887.3,380.2 L889.5,387.5 L892.6,394.6 L896.5,401.5 L901.1,408.1 L906.3,414.2 L912.1,419.7 L918.4,424.6 L925,428.7 L931.9,432 L938.8,434.5 L945.8,436 L952.6,436.6 L959.2,436.3 L965.5,435 L971.3,432.8 L976.5,429.7 L981.1,425.8 L985,421.1 L988.1,415.7 L990.4,409.8 L991.7,403.3Z" fill="none" stroke="#111" stroke-width="1"/>
<path d="M1004.5,385.9 L1004,378.8 L1002.6,371.6 L1000.4,364.4 L997.3,357.2 L993.4,350.3 L988.8,343.8 L983.6,337.7 L977.8,332.1 L971.5,327.3 L964.9,323.1 L958.1,319.8 L951.1,317.4 L944.1,315.8 L937.3,315.2 L930.7,315.6 L924.4,316.8 L918.6,319.1 L913.4,322.1 L908.8,326.1 L904.9,330.7 L901.8,336.1 L899.6,342.1 L898.2,348.5 L897.8,355.3 L898.2,362.4 L899.6,369.6 L901.8,376.9 L904.9,384 L908.8,390.9 L913.4,397.4 L918.6,403.5 L924.4,409.1 L930.7,413.9 L937.3,418.1 L944.1,421.4 L951.1,423.9 L958.1,425.4 L964.9,426 L971.5,425.7 L977.8,424.4 L983.6,422.2 L988.8,419.1 L993.4,415.1 L997.3,410.5 L1000.4,405.1 L1002.6,399.2 L1004,392.7Z" fill="none" stroke="#222" stroke-width="0.9" clip-path="url(#c0)"/>
<clipPath id="c0"><path d="M992.2,396.5 L991.7,389.4 L990.4,382.2 L988.1,375 L985,367.8 L981.1,360.9 L976.5,354.4 L971.3,348.3 L965.5,342.8 L959.2,337.9 L952.6,333.8 L945.8,330.4 L938.8,328 L931.9,326.4 L925,325.8 L918.4,326.2 L912.1,327.5 L906.3,329.7 L901.1,332.8 L896.5,336.7 L892.6,341.4 L889.5,346.7 L887.3,352.7 L885.9,359.1 L885.5,365.9 L885.9,373 L887.3,380.2 L889.5,387.5 L892.6,394.6 L896.5,401.5 L901.1,408.1 L906.3,414.2 L912.1,419.7 L918.4,424.6 L925,428.7 L931.9,432 L938.8,434.5 L945.8,436 L952.6,436.6 L959.2,436.3 L965.5,435 L971.3,432.8 L976.5,429.7 L981.1,425.8 L985,421.1 L988.1,415.7 L990.4,409.8 L991.7,403.3Z"/></clipPath>
<mask id="m1" maskUnits="userSpaceOnUse" x="0" y="0" width="1919" height="1079"><path d="M1118.9,442.8 L1118.5,436.4 L1117.2,429.9 L1115.2,423.3 L1112.4,416.9 L1108.9,410.7 L1104.8,404.7 L1100,399.2 L1094.8,394.2 L1089.1,389.8 L1083.1,386.1 L1077,383.1 L1070.7,380.9 L1064.4,379.5 L1058.2,378.9 L1052.2,379.2 L1046.5,380.4 L1041.3,382.4 L1036.6,385.2 L1032.4,388.7 L1028.9,393 L1026.1,397.8 L1024.1,403.2 L1022.9,409 L1022.4,415.2 L1022.9,421.6 L1024.1,428.1 L1026.1,434.6 L1028.9,441.1 L1032.4,447.3 L1036.6,453.3 L1041.3,458.8 L1046.5,463.8 L1052.2,468.2 L1058.2,471.9 L1064.4,474.9 L1070.7,477.1 L1077,478.5 L1083.1,479.1 L1089.1,478.7 L1094.8,477.6 L1100,475.6 L1104.8,472.8 L1108.9,469.3 L1112.4,465 L1115.2,460.2 L1117.2,454.8 L1118.5,449Z" fill="#fff"/><path d="M1131.2,432.2 L1130.8,425.8 L1129.5,419.3 L1127.5,412.7 L1124.7,406.3 L1121.2,400 L1117,394.1 L1112.3,388.6 L1107.1,383.6 L1101.4,379.2 L1095.4,375.5 L1089.2,372.5 L1082.9,370.2 L1076.6,368.8 L1070.5,368.3 L1064.5,368.6 L1058.8,369.8 L1053.6,371.8 L1048.8,374.6 L1044.7,378.1 L1041.2,382.3 L1038.4,387.2 L1036.4,392.6 L1035.1,398.4 L1034.7,404.6 L1035.1,411 L1036.4,417.5 L1038.4,424 L1041.2,430.5 L1044.7,436.7 L1048.8,442.6 L1053.6,448.1 L1058.8,453.1 L1064.5,457.5 L1070.5,461.3 L1076.6,464.3 L1082.9,466.5 L1089.2,467.9 L1095.4,468.4 L1101.4,468.1 L1107.1,467 L1112.3,465 L1117,462.2 L1121.2,458.6 L1124.7,454.4 L1127.5,449.6 L1129.5,444.2 L1130.8,438.3Z" fill="#000"/></mask>
<path d="M1118.9,442.8 L1118.5,436.4 L1117.2,429.9 L1115.2,423.3 L1112.4,416.9 L1108.9,410.7 L1104.8,404.7 L1100,399.2 L1094.8,394.2 L1089.1,389.8 L1083.1,386.1 L1077,383.1 L1070.7,380.9 L1064.4,379.5 L1058.2,378.9 L1052.2,379.2 L1046.5,380.4 L1041.3,382.4 L1036.6,385.2 L1032.4,388.7 L1028.9,393 L1026.1,397.8 L1024.1,403.2 L1022.9,409 L1022.4,415.2 L1022.9,421.6 L1024.1,428.1 L1026.1,434.6 L1028.9,441.1 L1032.4,447.3 L1036.6,453.3 L1041.3,458.8 L1046.5,463.8 L1052.2,468.2 L1058.2,471.9 L1064.4,474.9 L1070.7,477.1 L1077,478.5 L1083.1,479.1 L1089.1,478.7 L1094.8,477.6 L1100,475.6 L1104.8,472.8 L1108.9,469.3 L1112.4,465 L1115.2,460.2 L1117.2,454.8 L1118.5,449Z" fill="url(#wall)" mask="url(#m1)"/>
<path d="M1118.9,442.8 L1118.5,436.4 L1117.2,429.9 L1115.2,423.3 L1112.4,416.9 L1108.9,410.7 L1104.8,404.7 L1100,399.2 L1094.8,394.2 L1089.1,389.8 L1083.1,386.1 L1077,383.1 L1070.7,380.9 L1064.4,379.5 L1058.2,378.9 L1052.2,379.2 L1046.5,380.4 L1041.3,382.4 L1036.6,385.2 L1032.4,388.7 L1028.9,393 L1026.1,397.8 L1024.1,403.2 L1022.9,409 L1022.4,415.2 L1022.9,421.6 L1024.1,428.1 L1026.1,434.6 L1028.9,441.1 L1032.4,447.3 L1036.6,453.3 L1041.3,458.8 L1046.5,463.8 L1052.2,468.2 L1058.2,471.9 L1064.4,474.9 L1070.7,477.1 L1077,478.5 L1083.1,479.1 L1089.1,478.7 L1094.8,477.6 L1100,475.6 L1104.8,472.8 L1108.9,469.3 L1112.4,465 L1115.2,460.2 L1117.2,454.8 L1118.5,449Z" fill="none" stroke="#111" stroke-width="1"/>
<path d="M1131.2,432.2 L1130.8,425.8 L1129.5,419.3 L1127.5,412.7 L1124.7,406.3 L1121.2,400 L1117,394.1 L1112.3,388.6 L1107.1,383.6 L1101.4,379.2 L1095.4,375.5 L1089.2,372.5 L1082.9,370.2 L1076.6,368.8 L1070.5,368.3 L1064.5,368.6 L1058.8,369.8 L1053.6,371.8 L1048.8,374.6 L1044.7,378.1 L1041.2,382.3 L1038.4,387.2 L1036.4,392.6 L1035.1,398.4 L1034.7,404.6 L1035.1,411 L1036.4,417.5 L1038.4,424 L1041.2,430.5 L1044.7,436.7 L1048.8,442.6 L1053.6,448.1 L1058.8,453.1 L1064.5,457.5 L1070.5,461.3 L1076.6,464.3 L1082.9,466.5 L1089.2,467.9 L1095.4,468.4 L1101.4,468.1 L1107.1,467 L1112.3,465 L1117,462.2 L1121.2,458.6 L1124.7,454.4 L1127.5,449.6 L1129.5,444.2 L1130.8,438.3Z" fill="none" stroke="#222" stroke-width="0.9" clip-path="url(#c1)"/>
<clipPath id="c1"><path d="M1118.9,442.8 L1118.5,436.4 L1117.2,429.9 L1115.2,423.3 L1112.4,416.9 L1108.9,410.7 L1104.8,404.7 L1100,399.2 L1094.8,394.2 L1089.1,389.8 L1083.1,386.1 L1077,383.1 L1070.7,380.9 L1064.4,379.5 L1058.2,378.9 L1052.2,379.2 L1046.5,380.4 L1041.3,382.4 L1036.6,385.2 L1032.4,388.7 L1028.9,393 L1026.1,397.8 L1024.1,403.2 L1022.9,409 L1022.4,415.2 L1022.9,421.6 L1024.1,428.1 L1026.1,434.6 L1028.9,441.1 L1032.4,447.3 L1036.6,453.3 L1041.3,458.8 L1046.5,463.8 L1052.2,468.2 L1058.2,471.9 L1064.4,474.9 L1070.7,477.1 L1077,478.5 L1083.1,479.1 L1089.1,478.7 L1094.8,477.6 L1100,475.6 L1104.8,472.8 L1108.9,469.3 L1112.4,465 L1115.2,460.2 L1117.2,454.8 L1118.5,449Z"/></clipPath>
<mask id="m2" maskUnits="userSpaceOnUse" x="0" y="0" width="1919" height="1079"><path d="M1255.9,472.1 L1255.4,465 L1254,457.8 L1251.8,450.5 L1248.7,443.4 L1244.8,436.5 L1240.2,429.9 L1235,423.8 L1229.2,418.3 L1222.9,413.4 L1216.3,409.3 L1209.5,406 L1202.5,403.5 L1195.5,402 L1188.7,401.4 L1182.1,401.7 L1175.8,403 L1170,405.2 L1164.8,408.3 L1160.2,412.2 L1156.3,416.9 L1153.2,422.3 L1151,428.2 L1149.6,434.7 L1149.1,441.5 L1149.6,448.6 L1151,455.8 L1153.2,463 L1156.3,470.2 L1160.2,477.1 L1164.8,483.6 L1170,489.7 L1175.8,495.3 L1182.1,500.1 L1188.7,504.3 L1195.5,507.6 L1202.5,510 L1209.5,511.6 L1216.3,512.2 L1222.9,511.8 L1229.2,510.5 L1235,508.3 L1240.2,505.2 L1244.8,501.3 L1248.7,496.7 L1251.8,491.3 L1254,485.3 L1255.4,478.9Z" fill="#fff"/><path d="M1268.1,461.5 L1267.7,454.4 L1266.3,447.1 L1264.1,439.9 L1261,432.8 L1257.1,425.9 L1252.5,419.3 L1247.3,413.2 L1241.5,407.7 L1235.2,402.8 L1228.6,398.7 L1221.7,395.4 L1214.8,392.9 L1207.8,391.4 L1201,390.8 L1194.4,391.1 L1188.1,392.4 L1182.3,394.6 L1177.1,397.7 L1172.5,401.6 L1168.6,406.3 L1165.5,411.7 L1163.3,417.6 L1161.9,424.1 L1161.4,430.9 L1161.9,438 L1163.3,445.2 L1165.5,452.4 L1168.6,459.5 L1172.5,466.4 L1177.1,473 L1182.3,479.1 L1188.1,484.6 L1194.4,489.5 L1201,493.6 L1207.8,497 L1214.8,499.4 L1221.7,501 L1228.6,501.6 L1235.2,501.2 L1241.5,499.9 L1247.3,497.7 L1252.5,494.6 L1257.1,490.7 L1261,486 L1264.1,480.7 L1266.3,474.7 L1267.7,468.3Z" fill="#000"/></mask>
<path d="M1255.9,472.1 L1255.4,465 L1254,457.8 L1251.8,450.5 L1248.7,443.4 L1244.8,436.5 L1240.2,429.9 L1235,423.8 L1229.2,418.3 L1222.9,413.4 L1216.3,409.3 L1209.5,406 L1202.5,403.5 L1195.5,402 L1188.7,401.4 L1182.1,401.7 L1175.8,403 L1170,405.2 L1164.8,408.3 L1160.2,412.2 L1156.3,416.9 L1153.2,422.3 L1151,428.2 L1149.6,434.7 L1149.1,441.5 L1149.6,448.6 L1151,455.8 L1153.2,463 L1156.3,470.2 L1160.2,477.1 L1164.8,483.6 L1170,489.7 L1175.8,495.3 L1182.1,500.1 L1188.7,504.3 L1195.5,507.6 L1202.5,510 L1209.5,511.6 L1216.3,512.2 L1222.9,511.8 L1229.2,510.5 L1235,508.3 L1240.2,505.2 L1244.8,501.3 L1248.7,496.7 L1251.8,491.3 L1254,485.3 L1255.4,478.9Z" fill="url(#wall)" mask="url(#m2)"/>
<path d="M1255.9,472.1 L1255.4,465 L1254,457.8 L1251.8,450.5 L1248.7,443.4 L1244.8,436.5 L1240.2,429.9 L1235,423.8 L1229.2,418.3 L1222.9,413.4 L1216.3,409.3 L1209.5,406 L1202.5,403.5 L1195.5,402 L1188.7,401.4 L1182.1,401.7 L1175.8,403 L1170,405.2 L1164.8,408.3 L1160.2,412.2 L1156.3,416.9 L1153.2,422.3 L1151,428.2 L1149.6,434.7 L1149.1,441.5 L1149.6,448.6 L1151,455.8 L1153.2,463 L1156.3,470.2 L1160.2,477.1 L1164.8,483.6 L1170,489.7 L1175.8,495.3 L1182.1,500.1 L1188.7,504.3 L1195.5,507.6 L1202.5,510 L1209.5,511.6 L1216.3,512.2 L1222.9,511.8 L1229.2,510.5 L1235,508.3 L1240.2,505.2 L1244.8,501.3 L1248.7,496.7 L1251.8,491.3 L1254,485.3 L1255.4,478.9Z" fill="none" stroke="#111" stroke-width="1"/>
<path d="M1268.1,461.5 L1267.7,454.4 L1266.3,447.1 L1264.1,439.9 L1261,432.8 L1257.1,425.9 L1252.5,419.3 L1247.3,413.2 L1241.5,407.7 L1235.2,402.8 L1228.6,398.7 L1221.7,395.4 L1214.8,392.9 L1207.8,391.4 L1201,390.8 L1194.4,391.1 L1188.1,392.4 L1182.3,394.6 L1177.1,397.7 L1172.5,401.6 L1168.6,406.3 L1165.5,411.7 L1163.3,417.6 L1161.9,424.1 L1161.4,430.9 L1161.9,438 L1163.3,445.2 L1165.5,452.4 L1168.6,459.5 L1172.5,466.4 L1177.1,473 L1182.3,479.1 L1188.1,484.6 L1194.4,489.5 L1201,493.6 L1207.8,497 L1214.8,499.4 L1221.7,501 L1228.6,501.6 L1235.2,501.2 L1241.5,499.9 L1247.3,497.7 L1252.5,494.6 L1257.1,490.7 L1261,486 L1264.1,480.7 L1266.3,474.7 L1267.7,468.3Z" fill="none" stroke="#222" stroke-width="0.9" clip-path="url(#c2)"/>
<clipPath id="c2"><path d="M1255.9,472.1 L1255.4,465 L1254,457.8 L1251.8,450.5 L1248.7,443.4 L1244.8,436.5 L1240.2,429.9 L1235,423.8 L1229.2,418.3 L1222.9,413.4 L1216.3,409.3 L1209.5,406 L1202.5,403.5 L1195.5,402 L1188.7,401.4 L1182.1,401.7 L1175.8,403 L1170,405.2 L1164.8,408.3 L1160.2,412.2 L1156.3,416.9 L1153.2,422.3 L1151,428.2 L1149.6,434.7 L1149.1,441.5 L1149.6,448.6 L1151,455.8 L1153.2,463 L1156.3,470.2 L1160.2,477.1 L1164.8,483.6 L1170,489.7 L1175.8,495.3 L1182.1,500.1 L1188.7,504.3 L1195.5,507.6 L1202.5,510 L1209.5,511.6 L1216.3,512.2 L1222.9,511.8 L1229.2,510.5 L1235,508.3 L1240.2,505.2 L1244.8,501.3 L1248.7,496.7 L1251.8,491.3 L1254,485.3 L1255.4,478.9Z"/></clipPath>
<mask id="m3" maskUnits="userSpaceOnUse" x="0" y="0" width="1919" height="1079"><path d="M1118.9,592.1 L1118.5,585.7 L1117.2,579.1 L1115.2,572.6 L1112.4,566.1 L1108.9,559.9 L1104.8,554 L1100,548.5 L1094.8,543.5 L1089.1,539.1 L1083.1,535.3 L1077,532.3 L1070.7,530.1 L1064.4,528.7 L1058.2,528.2 L1052.2,528.5 L1046.5,529.7 L1041.3,531.6 L1036.6,534.4 L1032.4,538 L1028.9,542.2 L1026.1,547.1 L1024.1,552.4 L1022.9,558.3 L1022.4,564.4 L1022.9,570.8 L1024.1,577.3 L1026.1,583.9 L1028.9,590.3 L1032.4,596.6 L1036.6,602.5 L1041.3,608 L1046.5,613 L1052.2,617.4 L1058.2,621.2 L1064.4,624.2 L1070.7,626.4 L1077,627.8 L1083.1,628.3 L1089.1,628 L1094.8,626.8 L1100,624.8 L1104.8,622 L1108.9,618.5 L1112.4,614.3 L1115.2,609.4 L1117.2,604 L1118.5,598.2Z" fill="#fff"/><path d="M1131.2,581.4 L1130.8,575 L1129.5,568.5 L1127.5,562 L1124.7,555.5 L1121.2,549.3 L1117,543.4 L1112.3,537.8 L1107.1,532.8 L1101.4,528.4 L1095.4,524.7 L1089.2,521.7 L1082.9,519.5 L1076.6,518.1 L1070.5,517.6 L1064.5,517.9 L1058.8,519 L1053.6,521 L1048.8,523.8 L1044.7,527.4 L1041.2,531.6 L1038.4,536.4 L1036.4,541.8 L1035.1,547.6 L1034.7,553.8 L1035.1,560.2 L1036.4,566.7 L1038.4,573.3 L1041.2,579.7 L1044.7,586 L1048.8,591.9 L1053.6,597.4 L1058.8,602.4 L1064.5,606.8 L1070.5,610.5 L1076.6,613.5 L1082.9,615.7 L1089.2,617.1 L1095.4,617.7 L1101.4,617.4 L1107.1,616.2 L1112.3,614.2 L1117,611.4 L1121.2,607.9 L1124.7,603.6 L1127.5,598.8 L1129.5,593.4 L1130.8,587.6Z" fill="#000"/></mask>
<path d="M1118.9,592.1 L1118.5,585.7 L1117.2,579.1 L1115.2,572.6 L1112.4,566.1 L1108.9,559.9 L1104.8,554 L1100,548.5 L1094.8,543.5 L1089.1,539.1 L1083.1,535.3 L1077,532.3 L1070.7,530.1 L1064.4,528.7 L1058.2,528.2 L1052.2,528.5 L1046.5,529.7 L1041.3,531.6 L1036.6,534.4 L1032.4,538 L1028.9,542.2 L1026.1,547.1 L1024.1,552.4 L1022.9,558.3 L1022.4,564.4 L1022.9,570.8 L1024.1,577.3 L1026.1,583.9 L1028.9,590.3 L1032.4,596.6 L1036.6,602.5 L1041.3,608 L1046.5,613 L1052.2,617.4 L1058.2,621.2 L1064.4,624.2 L1070.7,626.4 L1077,627.8 L1083.1,628.3 L1089.1,628 L1094.8,626.8 L1100,624.8 L1104.8,622 L1108.9,618.5 L1112.4,614.3 L1115.2,609.4 L1117.2,604 L1118.5,598.2Z" fill="url(#wall)" mask="url(#m3)"/>
<path d="M1118.9,592.1 L1118.5,585.7 L1117.2,579.1 L1115.2,572.6 L1112.4,566.1 L1108.9,559.9 L1104.8,554 L1100,548.5 L1094.8,543.5 L1089.1,539.1 L1083.1,535.3 L1077,532.3 L1070.7,530.1 L1064.4,528.7 L1058.2,528.2 L1052.2,528.5 L1046.5,529.7 L1041.3,531.6 L1036.6,534.4 L1032.4,538 L1028.9,542.2 L1026.1,547.1 L1024.1,552.4 L1022.9,558.3 L1022.4,564.4 L1022.9,570.8 L1024.1,577.3 L1026.1,583.9 L1028.9,590.3 L1032.4,596.6 L1036.6,602.5 L1041.3,608 L1046.5,613 L1052.2,617.4 L1058.2,621.2 L1064.4,624.2 L1070.7,626.4 L1077,627.8 L1083.1,628.3 L1089.1,628 L1094.8,626.8 L1100,624.8 L1104.8,622 L1108.9,618.5 L1112.4,614.3 L1115.2,609.4 L1117.2,604 L1118.5,598.2Z" fill="none" stroke="#111" stroke-width="1"/>
<path d="M1131.2,581.4 L1130.8,575 L1129.5,568.5 L1127.5,562 L1124.7,555.5 L1121.2,549.3 L1117,543.4 L1112.3,537.8 L1107.1,532.8 L1101.4,528.4 L1095.4,524.7 L1089.2,521.7 L1082.9,519.5 L1076.6,518.1 L1070.5,517.6 L1064.5,517.9 L1058.8,519 L1053.6,521 L1048.8,523.8 L1044.7,527.4 L1041.2,531.6 L1038.4,536.4 L1036.4,541.8 L1035.1,547.6 L1034.7,553.8 L1035.1,560.2 L1036.4,566.7 L1038.4,573.3 L1041.2,579.7 L1044.7,586 L1048.8,591.9 L1053.6,597.4 L1058.8,602.4 L1064.5,606.8 L1070.5,610.5 L1076.6,613.5 L1082.9,615.7 L1089.2,617.1 L1095.4,617.7 L1101.4,617.4 L1107.1,616.2 L1112.3,614.2 L1117,611.4 L1121.2,607.9 L1124.7,603.6 L1127.5,598.8 L1129.5,593.4 L1130.8,587.6Z" fill="none" stroke="#222" stroke-width="0.9" clip-path="url(#c3)"/>
<clipPath id="c3"><path d="M1118.9,592.1 L1118.5,585.7 L1117.2,579.1 L1115.2,572.6 L1112.4,566.1 L1108.9,559.9 L1104.8,554 L1100,548.5 L1094.8,543.5 L1089.1,539.1 L1083.1,535.3 L1077,532.3 L1070.7,530.1 L1064.4,528.7 L1058.2,528.2 L1052.2,528.5 L1046.5,529.7 L1041.3,531.6 L1036.6,534.4 L1032.4,538 L1028.9,542.2 L1026.1,547.1 L1024.1,552.4 L1022.9,558.3 L1022.4,564.4 L1022.9,570.8 L1024.1,577.3 L1026.1,583.9 L1028.9,590.3 L1032.4,596.6 L1036.6,602.5 L1041.3,608 L1046.5,613 L1052.2,617.4 L1058.2,621.2 L1064.4,624.2 L1070.7,626.4 L1077,627.8 L1083.1,628.3 L1089.1,628 L1094.8,626.8 L1100,624.8 L1104.8,622 L1108.9,618.5 L1112.4,614.3 L1115.2,609.4 L1117.2,604 L1118.5,598.2Z"/></clipPath>
<mask id="m4" maskUnits="userSpaceOnUse" x="0" y="0" width="1919" height="1079"><path d="M947.3,297.6 L946.9,294.9 L945.7,292.2 L943.8,289.8 L941.4,287.9 L938.8,286.8 L936.2,286.4 L933.8,287 L932,288.3 L930.8,290.3 L930.4,292.8 L930.8,295.5 L932,298.2 L933.8,300.6 L936.2,302.5 L938.8,303.7 L941.4,304 L943.8,303.5 L945.7,302.1 L946.9,300.1Z" fill="#fff"/><path d="M959.6,287 L959.2,284.3 L958,281.6 L956.1,279.2 L953.7,277.3 L951.1,276.1 L948.5,275.8 L946.1,276.3 L944.3,277.7 L943.1,279.7 L942.6,282.2 L943.1,284.9 L944.3,287.6 L946.1,290 L948.5,291.9 L951.1,293 L953.7,293.4 L956.1,292.8 L958,291.5 L959.2,289.5Z" fill="#000"/></mask>
<path d="M947.3,297.6 L946.9,294.9 L945.7,292.2 L943.8,289.8 L941.4,287.9 L938.8,286.8 L936.2,286.4 L933.8,287 L932,288.3 L930.8,290.3 L930.4,292.8 L930.8,295.5 L932,298.2 L933.8,300.6 L936.2,302.5 L938.8,303.7 L941.4,304 L943.8,303.5 L945.7,302.1 L946.9,300.1Z" fill="#eef1f4"/>
<path d="M947.3,297.6 L946.9,294.9 L945.7,292.2 L943.8,289.8 L941.4,287.9 L938.8,286.8 L936.2,286.4 L933.8,287 L932,288.3 L930.8,290.3 L930.4,292.8 L930.8,295.5 L932,298.2 L933.8,300.6 L936.2,302.5 L938.8,303.7 L941.4,304 L943.8,303.5 L945.7,302.1 L946.9,300.1Z" fill="url(#wall)" mask="url(#m4)"/>
<path d="M947.3,297.6 L946.9,294.9 L945.7,292.2 L943.8,289.8 L941.4,287.9 L938.8,286.8 L936.2,286.4 L933.8,287 L932,288.3 L930.8,290.3 L930.4,292.8 L930.8,295.5 L932,298.2 L933.8,300.6 L936.2,302.5 L938.8,303.7 L941.4,304 L943.8,303.5 L945.7,302.1 L946.9,300.1Z" fill="none" stroke="#111" stroke-width="1"/>
<path d="M959.6,287 L959.2,284.3 L958,281.6 L956.1,279.2 L953.7,277.3 L951.1,276.1 L948.5,275.8 L946.1,276.3 L944.3,277.7 L943.1,279.7 L942.6,282.2 L943.1,284.9 L944.3,287.6 L946.1,290 L948.5,291.9 L951.1,293 L953.7,293.4 L956.1,292.8 L958,291.5 L959.2,289.5Z" fill="none" stroke="#222" stroke-width="0.9" clip-path="url(#c4)"/>
<clipPath id="c4"><path d="M947.3,297.6 L946.9,294.9 L945.7,292.2 L943.8,289.8 L941.4,287.9 L938.8,286.8 L936.2,286.4 L933.8,287 L932,288.3 L930.8,290.3 L930.4,292.8 L930.8,295.5 L932,298.2 L933.8,300.6 L936.2,302.5 L938.8,303.7 L941.4,304 L943.8,303.5 L945.7,302.1 L946.9,300.1Z"/></clipPath>
<mask id="m5" maskUnits="userSpaceOnUse" x="0" y="0" width="1919" height="1079"><path d="M1211,373.2 L1210.6,370.5 L1209.3,367.8 L1207.5,365.4 L1205.1,363.5 L1202.5,362.3 L1199.9,362 L1197.5,362.5 L1195.7,363.8 L1194.5,365.9 L1194,368.3 L1194.5,371.1 L1195.7,373.8 L1197.5,376.2 L1199.9,378.1 L1202.5,379.2 L1205.1,379.6 L1207.5,379 L1209.3,377.7 L1210.6,375.7Z" fill="#fff"/><path d="M1223.2,362.6 L1222.8,359.8 L1221.6,357.1 L1219.8,354.7 L1217.4,352.9 L1214.8,351.7 L1212.2,351.4 L1209.8,351.9 L1207.9,353.2 L1206.7,355.2 L1206.3,357.7 L1206.7,360.5 L1207.9,363.2 L1209.8,365.6 L1212.2,367.4 L1214.8,368.6 L1217.4,368.9 L1219.8,368.4 L1221.6,367.1 L1222.8,365.1Z" fill="#000"/></mask>
<path d="M1211,373.2 L1210.6,370.5 L1209.3,367.8 L1207.5,365.4 L1205.1,363.5 L1202.5,362.3 L1199.9,362 L1197.5,362.5 L1195.7,363.8 L1194.5,365.9 L1194,368.3 L1194.5,371.1 L1195.7,373.8 L1197.5,376.2 L1199.9,378.1 L1202.5,379.2 L1205.1,379.6 L1207.5,379 L1209.3,377.7 L1210.6,375.7Z" fill="#eef1f4"/>
<path d="M1211,373.2 L1210.6,370.5 L1209.3,367.8 L1207.5,365.4 L1205.1,363.5 L1202.5,362.3 L1199.9,362 L1197.5,362.5 L1195.7,363.8 L1194.5,365.9 L1194,368.3 L1194.5,371.1 L1195.7,373.8 L1197.5,376.2 L1199.9,378.1 L1202.5,379.2 L1205.1,379.6 L1207.5,379 L1209.3,377.7 L1210.6,375.7Z" fill="url(#wall)" mask="url(#m5)"/>
<path d="M1211,373.2 L1210.6,370.5 L1209.3,367.8 L1207.5,365.4 L1205.1,363.5 L1202.5,362.3 L1199.9,362 L1197.5,362.5 L1195.7,363.8 L1194.5,365.9 L1194,368.3 L1194.5,371.1 L1195.7,373.8 L1197.5,376.2 L1199.9,378.1 L1202.5,379.2 L1205.1,379.6 L1207.5,379 L1209.3,377.7 L1210.6,375.7Z" fill="none" stroke="#111" stroke-width="1"/>
<path d="M1223.2,362.6 L1222.8,359.8 L1221.6,357.1 L1219.8,354.7 L1217.4,352.9 L1214.8,351.7 L1212.2,351.4 L1209.8,351.9 L1207.9,353.2 L1206.7,355.2 L1206.3,357.7 L1206.7,360.5 L1207.9,363.2 L1209.8,365.6 L1212.2,367.4 L1214.8,368.6 L1217.4,368.9 L1219.8,368.4 L1221.6,367.1 L1222.8,365.1Z" fill="none" stroke="#222" stroke-width="0.9" clip-path="url(#c5)"/>
<clipPath id="c5"><path d="M1211,373.2 L1210.6,370.5 L1209.3,367.8 L1207.5,365.4 L1205.1,363.5 L1202.5,362.3 L1199.9,362 L1197.5,362.5 L1195.7,363.8 L1194.5,365.9 L1194,368.3 L1194.5,371.1 L1195.7,373.8 L1197.5,376.2 L1199.9,378.1 L1202.5,379.2 L1205.1,379.6 L1207.5,379 L1209.3,377.7 L1210.6,375.7Z"/></clipPath>
<mask id="m6" maskUnits="userSpaceOnUse" x="0" y="0" width="1919" height="1079"><path d="M947.3,468.6 L946.9,465.9 L945.7,463.2 L943.8,460.8 L941.4,458.9 L938.8,457.8 L936.2,457.4 L933.8,458 L932,459.3 L930.8,461.3 L930.4,463.8 L930.8,466.5 L932,469.2 L933.8,471.6 L936.2,473.5 L938.8,474.7 L941.4,475 L943.8,474.5 L945.7,473.1 L946.9,471.1Z" fill="#fff"/><path d="M959.6,458 L959.2,455.3 L958,452.6 L956.1,450.2 L953.7,448.3 L951.1,447.1 L948.5,446.8 L946.1,447.3 L944.3,448.7 L943.1,450.7 L942.6,453.2 L943.1,455.9 L944.3,458.6 L946.1,461 L948.5,462.9 L951.1,464 L953.7,464.4 L956.1,463.9 L958,462.5 L959.2,460.5Z" fill="#000"/></mask>
<path d="M947.3,468.6 L946.9,465.9 L945.7,463.2 L943.8,460.8 L941.4,458.9 L938.8,457.8 L936.2,457.4 L933.8,458 L932,459.3 L930.8,461.3 L930.4,463.8 L930.8,466.5 L932,469.2 L933.8,471.6 L936.2,473.5 L938.8,474.7 L941.4,475 L943.8,474.5 L945.7,473.1 L946.9,471.1Z" fill="#eef1f4"/>
<path d="M947.3,468.6 L946.9,465.9 L945.7,463.2 L943.8,460.8 L941.4,458.9 L938.8,457.8 L936.2,457.4 L933.8,458 L932,459.3 L930.8,461.3 L930.4,463.8 L930.8,466.5 L932,469.2 L933.8,471.6 L936.2,473.5 L938.8,474.7 L941.4,475 L943.8,474.5 L945.7,473.1 L946.9,471.1Z" fill="url(#wall)" mask="url(#m6)"/>
<path d="M947.3,468.6 L946.9,465.9 L945.7,463.2 L943.8,460.8 L941.4,458.9 L938.8,457.8 L936.2,457.4 L933.8,458 L932,459.3 L930.8,461.3 L930.4,463.8 L930.8,466.5 L932,469.2 L933.8,471.6 L936.2,473.5 L938.8,474.7 L941.4,475 L943.8,474.5 L945.7,473.1 L946.9,471.1Z" fill="none" stroke="#111" stroke-width="1"/>
<path d="M959.6,458 L959.2,455.3 L958,452.6 L956.1,450.2 L953.7,448.3 L951.1,447.1 L948.5,446.8 L946.1,447.3 L944.3,448.7 L943.1,450.7 L942.6,453.2 L943.1,455.9 L944.3,458.6 L946.1,461 L948.5,462.9 L951.1,464 L953.7,464.4 L956.1,463.9 L958,462.5 L959.2,460.5Z" fill="none" stroke="#222" stroke-width="0.9" clip-path="url(#c6)"/>
<clipPath id="c6"><path d="M947.3,468.6 L946.9,465.9 L945.7,463.2 L943.8,460.8 L941.4,458.9 L938.8,457.8 L936.2,457.4 L933.8,458 L932,459.3 L930.8,461.3 L930.4,463.8 L930.8,466.5 L932,469.2 L933.8,471.6 L936.2,473.5 L938.8,474.7 L941.4,475 L943.8,474.5 L945.7,473.1 L946.9,471.1Z"/></clipPath>
<mask id="m7" maskUnits="userSpaceOnUse" x="0" y="0" width="1919" height="1079"><path d="M1211,544.2 L1210.6,541.5 L1209.3,538.8 L1207.5,536.4 L1205.1,534.5 L1202.5,533.3 L1199.9,533 L1197.5,533.5 L1195.7,534.9 L1194.5,536.9 L1194,539.4 L1194.5,542.1 L1195.7,544.8 L1197.5,547.2 L1199.9,549.1 L1202.5,550.2 L1205.1,550.6 L1207.5,550 L1209.3,548.7 L1210.6,546.7Z" fill="#fff"/><path d="M1223.2,533.6 L1222.8,530.9 L1221.6,528.2 L1219.8,525.7 L1217.4,523.9 L1214.8,522.7 L1212.2,522.4 L1209.8,522.9 L1207.9,524.2 L1206.7,526.2 L1206.3,528.7 L1206.7,531.5 L1207.9,534.2 L1209.8,536.6 L1212.2,538.4 L1214.8,539.6 L1217.4,539.9 L1219.8,539.4 L1221.6,538.1 L1222.8,536.1Z" fill="#000"/></mask>
<path d="M1211,544.2 L1210.6,541.5 L1209.3,538.8 L1207.5,536.4 L1205.1,534.5 L1202.5,533.3 L1199.9,533 L1197.5,533.5 L1195.7,534.9 L1194.5,536.9 L1194,539.4 L1194.5,542.1 L1195.7,544.8 L1197.5,547.2 L1199.9,549.1 L1202.5,550.2 L1205.1,550.6 L1207.5,550 L1209.3,548.7 L1210.6,546.7Z" fill="#eef1f4"/>
<path d="M1211,544.2 L1210.6,541.5 L1209.3,538.8 L1207.5,536.4 L1205.1,534.5 L1202.5,533.3 L1199.9,533 L1197.5,533.5 L1195.7,534.9 L1194.5,536.9 L1194,539.4 L1194.5,542.1 L1195.7,544.8 L1197.5,547.2 L1199.9,549.1 L1202.5,550.2 L1205.1,550.6 L1207.5,550 L1209.3,548.7 L1210.6,546.7Z" fill="url(#wall)" mask="url(#m7)"/>
<path d="M1211,544.2 L1210.6,541.5 L1209.3,538.8 L1207.5,536.4 L1205.1,534.5 L1202.5,533.3 L1199.9,533 L1197.5,533.5 L1195.7,534.9 L1194.5,536.9 L1194,539.4 L1194.5,542.1 L1195.7,544.8 L1197.5,547.2 L1199.9,549.1 L1202.5,550.2 L1205.1,550.6 L1207.5,550 L1209.3,548.7 L1210.6,546.7Z" fill="none" stroke="#111" stroke-width="1"/>
<path d="M1223.2,533.6 L1222.8,530.9 L1221.6,528.2 L1219.8,525.7 L1217.4,523.9 L1214.8,522.7 L1212.2,522.4 L1209.8,522.9 L1207.9,524.2 L1206.7,526.2 L1206.3,528.7 L1206.7,531.5 L1207.9,534.2 L1209.8,536.6 L1212.2,538.4 L1214.8,539.6 L1217.4,539.9 L1219.8,539.4 L1221.6,538.1 L1222.8,536.1Z" fill="none" stroke="#222" stroke-width="0.9" clip-path="url(#c7)"/>
<clipPath id="c7"><path d="M1211,544.2 L1210.6,541.5 L1209.3,538.8 L1207.5,536.4 L1205.1,534.5 L1202.5,533.3 L1199.9,533 L1197.5,533.5 L1195.7,534.9 L1194.5,536.9 L1194,539.4 L1194.5,542.1 L1195.7,544.8 L1197.5,547.2 L1199.9,549.1 L1202.5,550.2 L1205.1,550.6 L1207.5,550 L1209.3,548.7 L1210.6,546.7Z"/></clipPath>
<mask id="m8" maskUnits="userSpaceOnUse" x="0" y="0" width="1919" height="1079"><path d="M993.5,556.1 L993,553.4 L991.8,550.7 L990,548.3 L987.6,546.4 L985,545.2 L982.4,544.9 L980,545.4 L978.1,546.8 L976.9,548.8 L976.5,551.3 L976.9,554 L978.1,556.7 L980,559.1 L982.4,561 L985,562.1 L987.6,562.5 L990,562 L991.8,560.6 L993,558.6Z" fill="#fff"/><path d="M1005.7,545.5 L1005.3,542.8 L1004.1,540.1 L1002.2,537.7 L999.9,535.8 L997.3,534.6 L994.7,534.3 L992.3,534.8 L990.4,536.1 L989.2,538.1 L988.8,540.6 L989.2,543.4 L990.4,546.1 L992.3,548.5 L994.7,550.4 L997.3,551.5 L999.9,551.9 L1002.2,551.3 L1004.1,550 L1005.3,548Z" fill="#000"/></mask>
<path d="M993.5,556.1 L993,553.4 L991.8,550.7 L990,548.3 L987.6,546.4 L985,545.2 L982.4,544.9 L980,545.4 L978.1,546.8 L976.9,548.8 L976.5,551.3 L976.9,554 L978.1,556.7 L980,559.1 L982.4,561 L985,562.1 L987.6,562.5 L990,562 L991.8,560.6 L993,558.6Z" fill="#eef1f4"/>
<path d="M993.5,556.1 L993,553.4 L991.8,550.7 L990,548.3 L987.6,546.4 L985,545.2 L982.4,544.9 L980,545.4 L978.1,546.8 L976.9,548.8 L976.5,551.3 L976.9,554 L978.1,556.7 L980,559.1 L982.4,561 L985,562.1 L987.6,562.5 L990,562 L991.8,560.6 L993,558.6Z" fill="url(#wall)" mask="url(#m8)"/>
<path d="M993.5,556.1 L993,553.4 L991.8,550.7 L990,548.3 L987.6,546.4 L985,545.2 L982.4,544.9 L980,545.4 L978.1,546.8 L976.9,548.8 L976.5,551.3 L976.9,554 L978.1,556.7 L980,559.1 L982.4,561 L985,562.1 L987.6,562.5 L990,562 L991.8,560.6 L993,558.6Z" fill="none" stroke="#111" stroke-width="1"/>
<path d="M1005.7,545.5 L1005.3,542.8 L1004.1,540.1 L1002.2,537.7 L999.9,535.8 L997.3,534.6 L994.7,534.3 L992.3,534.8 L990.4,536.1 L989.2,538.1 L988.8,540.6 L989.2,543.4 L990.4,546.1 L992.3,548.5 L994.7,550.4 L997.3,551.5 L999.9,551.9 L1002.2,551.3 L1004.1,550 L1005.3,548Z" fill="none" stroke="#222" stroke-width="0.9" clip-path="url(#c8)"/>
<clipPath id="c8"><path d="M993.5,556.1 L993,553.4 L991.8,550.7 L990,548.3 L987.6,546.4 L985,545.2 L982.4,544.9 L980,545.4 L978.1,546.8 L976.9,548.8 L976.5,551.3 L976.9,554 L978.1,556.7 L980,559.1 L982.4,561 L985,562.1 L987.6,562.5 L990,562 L991.8,560.6 L993,558.6Z"/></clipPath>
<mask id="m9" maskUnits="userSpaceOnUse" x="0" y="0" width="1919" height="1079"><path d="M1164.8,605.2 L1164.4,602.5 L1163.2,599.8 L1161.3,597.4 L1158.9,595.5 L1156.3,594.3 L1153.7,594 L1151.4,594.5 L1149.5,595.9 L1148.3,597.9 L1147.9,600.4 L1148.3,603.1 L1149.5,605.8 L1151.4,608.2 L1153.7,610.1 L1156.3,611.2 L1158.9,611.6 L1161.3,611 L1163.2,609.7 L1164.4,607.7Z" fill="#fff"/><path d="M1177.1,594.6 L1176.7,591.9 L1175.5,589.2 L1173.6,586.8 L1171.2,584.9 L1168.6,583.7 L1166,583.4 L1163.6,583.9 L1161.8,585.2 L1160.6,587.2 L1160.2,589.7 L1160.6,592.5 L1161.8,595.2 L1163.6,597.6 L1166,599.5 L1168.6,600.6 L1171.2,600.9 L1173.6,600.4 L1175.5,599.1 L1176.7,597.1Z" fill="#000"/></mask>
<path d="M1164.8,605.2 L1164.4,602.5 L1163.2,599.8 L1161.3,597.4 L1158.9,595.5 L1156.3,594.3 L1153.7,594 L1151.4,594.5 L1149.5,595.9 L1148.3,597.9 L1147.9,600.4 L1148.3,603.1 L1149.5,605.8 L1151.4,608.2 L1153.7,610.1 L1156.3,611.2 L1158.9,611.6 L1161.3,611 L1163.2,609.7 L1164.4,607.7Z" fill="#eef1f4"/>
<path d="M1164.8,605.2 L1164.4,602.5 L1163.2,599.8 L1161.3,597.4 L1158.9,595.5 L1156.3,594.3 L1153.7,594 L1151.4,594.5 L1149.5,595.9 L1148.3,597.9 L1147.9,600.4 L1148.3,603.1 L1149.5,605.8 L1151.4,608.2 L1153.7,610.1 L1156.3,611.2 L1158.9,611.6 L1161.3,611 L1163.2,609.7 L1164.4,607.7Z" fill="url(#wall)" mask="url(#m9)"/>
<path d="M1164.8,605.2 L1164.4,602.5 L1163.2,599.8 L1161.3,597.4 L1158.9,595.5 L1156.3,594.3 L1153.7,594 L1151.4,594.5 L1149.5,595.9 L1148.3,597.9 L1147.9,600.4 L1148.3,603.1 L1149.5,605.8 L1151.4,608.2 L1153.7,610.1 L1156.3,611.2 L1158.9,611.6 L1161.3,611 L1163.2,609.7 L1164.4,607.7Z" fill="none" stroke="#111" stroke-width="1"/>
<path d="M1177.1,594.6 L1176.7,591.9 L1175.5,589.2 L1173.6,586.8 L1171.2,584.9 L1168.6,583.7 L1166,583.4 L1163.6,583.9 L1161.8,585.2 L1160.6,587.2 L1160.2,589.7 L1160.6,592.5 L1161.8,595.2 L1163.6,597.6 L1166,599.5 L1168.6,600.6 L1171.2,600.9 L1173.6,600.4 L1175.5,599.1 L1176.7,597.1Z" fill="none" stroke="#222" stroke-width="0.9" clip-path="url(#c9)"/>
<clipPath id="c9"><path d="M1164.8,605.2 L1164.4,602.5 L1163.2,599.8 L1161.3,597.4 L1158.9,595.5 L1156.3,594.3 L1153.7,594 L1151.4,594.5 L1149.5,595.9 L1148.3,597.9 L1147.9,600.4 L1148.3,603.1 L1149.5,605.8 L1151.4,608.2 L1153.7,610.1 L1156.3,611.2 L1158.9,611.6 L1161.3,611 L1163.2,609.7 L1164.4,607.7Z"/></clipPath>
<mask id="m10" maskUnits="userSpaceOnUse" x="0" y="0" width="1919" height="1079"><path d="M1249.7,629.5 L1249.3,626.8 L1248.1,624.1 L1246.2,621.7 L1243.8,619.8 L1241.2,618.7 L1238.6,618.3 L1236.3,618.9 L1234.4,620.2 L1233.2,622.2 L1232.8,624.7 L1233.2,627.4 L1234.4,630.1 L1236.3,632.5 L1238.6,634.4 L1241.2,635.6 L1243.8,635.9 L1246.2,635.4 L1248.1,634 L1249.3,632Z" fill="#fff"/><path d="M1262,618.9 L1261.6,616.2 L1260.4,613.5 L1258.5,611.1 L1256.1,609.2 L1253.5,608 L1250.9,607.7 L1248.5,608.2 L1246.7,609.6 L1245.5,611.6 L1245.1,614.1 L1245.5,616.8 L1246.7,619.5 L1248.5,621.9 L1250.9,623.8 L1253.5,624.9 L1256.1,625.3 L1258.5,624.8 L1260.4,623.4 L1261.6,621.4Z" fill="#000"/></mask>
<path d="M1249.7,629.5 L1249.3,626.8 L1248.1,624.1 L1246.2,621.7 L1243.8,619.8 L1241.2,618.7 L1238.6,618.3 L1236.3,618.9 L1234.4,620.2 L1233.2,622.2 L1232.8,624.7 L1233.2,627.4 L1234.4,630.1 L1236.3,632.5 L1238.6,634.4 L1241.2,635.6 L1243.8,635.9 L1246.2,635.4 L1248.1,634 L1249.3,632Z" fill="#eef1f4"/>
<path d="M1249.7,629.5 L1249.3,626.8 L1248.1,624.1 L1246.2,621.7 L1243.8,619.8 L1241.2,618.7 L1238.6,618.3 L1236.3,618.9 L1234.4,620.2 L1233.2,622.2 L1232.8,624.7 L1233.2,627.4 L1234.4,630.1 L1236.3,632.5 L1238.6,634.4 L1241.2,635.6 L1243.8,635.9 L1246.2,635.4 L1248.1,634 L1249.3,632Z" fill="url(#wall)" mask="url(#m10)"/>
<path d="M1249.7,629.5 L1249.3,626.8 L1248.1,624.1 L1246.2,621.7 L1243.8,619.8 L1241.2,618.7 L1238.6,618.3 L1236.3,618.9 L1234.4,620.2 L1233.2,622.2 L1232.8,624.7 L1233.2,627.4 L1234.4,630.1 L1236.3,632.5 L1238.6,634.4 L1241.2,635.6 L1243.8,635.9 L1246.2,635.4 L1248.1,634 L1249.3,632Z" fill="none" stroke="#111" stroke-width="1"/>
<path d="M1262,618.9 L1261.6,616.2 L1260.4,613.5 L1258.5,611.1 L1256.1,609.2 L1253.5,608 L1250.9,607.7 L1248.5,608.2 L1246.7,609.6 L1245.5,611.6 L1245.1,614.1 L1245.5,616.8 L1246.7,619.5 L1248.5,621.9 L1250.9,623.8 L1253.5,624.9 L1256.1,625.3 L1258.5,624.8 L1260.4,623.4 L1261.6,621.4Z" fill="none" stroke="#222" stroke-width="0.9" clip-path="url(#c10)"/>
<clipPath id="c10"><path d="M1249.7,629.5 L1249.3,626.8 L1248.1,624.1 L1246.2,621.7 L1243.8,619.8 L1241.2,618.7 L1238.6,618.3 L1236.3,618.9 L1234.4,620.2 L1233.2,622.2 L1232.8,624.7 L1233.2,627.4 L1234.4,630.1 L1236.3,632.5 L1238.6,634.4 L1241.2,635.6 L1243.8,635.9 L1246.2,635.4 L1248.1,634 L1249.3,632Z"/></clipPath>
<mask id="m11" maskUnits="userSpaceOnUse" x="0" y="0" width="1919" height="1079"><path d="M908.6,531.8 L908.1,529.1 L906.9,526.4 L905.1,524 L902.7,522.1 L900.1,520.9 L897.5,520.6 L895.1,521.1 L893.2,522.4 L892,524.4 L891.6,526.9 L892,529.7 L893.2,532.4 L895.1,534.8 L897.5,536.6 L900.1,537.8 L902.7,538.1 L905.1,537.6 L906.9,536.3 L908.1,534.3Z" fill="#fff"/><path d="M920.8,521.2 L920.4,518.4 L919.2,515.7 L917.3,513.3 L915,511.5 L912.4,510.3 L909.8,510 L907.4,510.5 L905.5,511.8 L904.3,513.8 L903.9,516.3 L904.3,519 L905.5,521.7 L907.4,524.1 L909.8,526 L912.4,527.2 L915,527.5 L917.3,527 L919.2,525.7 L920.4,523.7Z" fill="#000"/></mask>
<path d="M908.6,531.8 L908.1,529.1 L906.9,526.4 L905.1,524 L902.7,522.1 L900.1,520.9 L897.5,520.6 L895.1,521.1 L893.2,522.4 L892,524.4 L891.6,526.9 L892,529.7 L893.2,532.4 L895.1,534.8 L897.5,536.6 L900.1,537.8 L902.7,538.1 L905.1,537.6 L906.9,536.3 L908.1,534.3Z" fill="#eef1f4"/>
<path d="M908.6,531.8 L908.1,529.1 L906.9,526.4 L905.1,524 L902.7,522.1 L900.1,520.9 L897.5,520.6 L895.1,521.1 L893.2,522.4 L892,524.4 L891.6,526.9 L892,529.7 L893.2,532.4 L895.1,534.8 L897.5,536.6 L900.1,537.8 L902.7,538.1 L905.1,537.6 L906.9,536.3 L908.1,534.3Z" fill="url(#wall)" mask="url(#m11)"/>
<path d="M908.6,531.8 L908.1,529.1 L906.9,526.4 L905.1,524 L902.7,522.1 L900.1,520.9 L897.5,520.6 L895.1,521.1 L893.2,522.4 L892,524.4 L891.6,526.9 L892,529.7 L893.2,532.4 L895.1,534.8 L897.5,536.6 L900.1,537.8 L902.7,538.1 L905.1,537.6 L906.9,536.3 L908.1,534.3Z" fill="none" stroke="#111" stroke-width="1"/>
<path d="M920.8,521.2 L920.4,518.4 L919.2,515.7 L917.3,513.3 L915,511.5 L912.4,510.3 L909.8,510 L907.4,510.5 L905.5,511.8 L904.3,513.8 L903.9,516.3 L904.3,519 L905.5,521.7 L907.4,524.1 L909.8,526 L912.4,527.2 L915,527.5 L917.3,527 L919.2,525.7 L920.4,523.7Z" fill="none" stroke="#222" stroke-width="0.9" clip-path="url(#c11)"/>
<clipPath id="c11"><path d="M908.6,531.8 L908.1,529.1 L906.9,526.4 L905.1,524 L902.7,522.1 L900.1,520.9 L897.5,520.6 L895.1,521.1 L893.2,522.4 L892,524.4 L891.6,526.9 L892,529.7 L893.2,532.4 L895.1,534.8 L897.5,536.6 L900.1,537.8 L902.7,538.1 L905.1,537.6 L906.9,536.3 L908.1,534.3Z"/></clipPath>
<g clip-path="url(#sil)" style="mix-blend-mode:screen">
<path d="M934.5,440 L1070.7,322.2 L1070.7,834.2 L934.5,952Z" fill="rgb(36,39,40)" style="mix-blend-mode:screen"/>
<path d="M678,622.5 L1191,769.5 L1327.2,651.7 L814.2,504.7Z" fill="rgb(36,39,40)" style="mix-blend-mode:screen"/>
</g>
<path d="M1070.7,322.2 L934.5,440 L934.5,952 L1070.7,834.2" fill="none" stroke="#a5bad8" stroke-width="1.2"/>
<path d="M814.2,504.7 L678,622.5 L1191,769.5 L1327.2,651.7" fill="none" stroke="#a5bad8" stroke-width="1.2"/>
<text x="0" y="0" transform="matrix(0.578,-0.5,0,1,937,452.5)" font-size="15" fill="#3063ad" font-family="Liberation Sans">Right</text>
<circle cx="1082.5" cy="568" r="4.2" fill="#fff" stroke="#000" stroke-width="1.6"/><circle cx="1082.5" cy="568" r="1.7" fill="#000"/>
<path d="M829.4,572.2 L830.2,567.5 L832.5,563.7 L887.2,516.3 L890.7,513.8 L895.2,512.9 L900.1,513.5 L905,515.7 L909.4,519.2 L913,523.7 L915.2,528.8 L916,533.9 L915.2,538.6 L913,542.4 L858.2,589.7 L854.7,592.2 L850.2,593.2 L845.3,592.6 L840.4,590.4 L836,586.9 L832.5,582.4 L830.2,577.3Z" fill="url(#sp)" fill-opacity="0.92" stroke="#3d7a49" stroke-width="1"/>
<path d="M916,533.9 L915.2,528.8 L913,523.7 L909.4,519.2 L905,515.7 L900.1,513.5 L895.2,512.9 L890.7,513.8 L887.2,516.3 L885,520.1 L884.2,524.8 L885,529.9 L887.2,535 L890.7,539.5 L895.2,543 L900.1,545.2 L905,545.9 L909.4,544.9 L913,542.4 L915.2,538.6Z" fill="#6fa97a" fill-opacity="0.6" stroke="#3d7a49" stroke-width="0.9"/>
<path d="M910.3,532.3 L909.8,529 L908.4,525.7 L906.1,522.8 L903.3,520.5 L900.1,519.1 L896.9,518.7 L894.1,519.4 L891.8,521 L890.3,523.4 L889.8,526.4 L890.3,529.7 L891.8,533 L894.1,535.9 L896.9,538.2 L900.1,539.6 L903.3,540 L906.1,539.4 L908.4,537.8 L909.8,535.3Z" fill="none" stroke="#f2a300" stroke-width="2.2"/>
<path d="M861.2,581.3 L860.5,576.2 L858.2,571.1 L854.7,566.6 L850.2,563 L845.3,560.9 L840.4,560.2 L836,561.2 L832.5,563.7 L830.2,567.5 L829.4,572.2 L830.2,577.3 L832.5,582.4 L836,586.9 L840.4,590.4 L845.3,592.6 L850.2,593.2 L854.7,592.2 L858.2,589.7 L860.5,586Z" fill="#6b9f75" stroke="#3d7a49" stroke-width="1"/>
<path d="M853.8,579.1 L853.4,576.4 L852.2,573.7 L850.3,571.3 L847.9,569.4 L845.3,568.3 L842.7,567.9 L840.4,568.5 L838.5,569.8 L837.3,571.8 L836.9,574.3 L837.3,577 L838.5,579.7 L840.4,582.1 L842.7,584 L845.3,585.2 L847.9,585.5 L850.3,585 L852.2,583.7 L853.4,581.6Z" fill="#9ed8a6" stroke="#3d7a49" stroke-width="1"/>
<path d="M845.3,576.7 L829,592" stroke="#fff" stroke-width="3"/><path d="M845.3,576.7 L829,592" stroke="#999" stroke-width="1"/>
<path d="M813,603 L824,583 L835,598 Z" fill="#fff" stroke="#8a8a8a" stroke-width="1.2"/>
</svg>
<svg style="left:10px;top:48px" width="20" height="20" viewBox="0 0 20 20"><circle cx="4.5" cy="4" r="3" fill="none" stroke="#222" stroke-width="1.6"/><path d="M4.5 7 V16 M4.5 12.5 Q9 12.5 9 9" fill="none" stroke="#222" stroke-width="1.6"/><circle cx="4.5" cy="16" r="1.6" fill="#222"/><circle cx="9" cy="9" r="1.3" fill="#222"/><path d="M10 2.5 H19.5 M12 7 H19.5 M12 11.5 H19.5 M10 16 H19.5" stroke="#222" stroke-width="1.8"/></svg>
<svg style="left:47px;top:48px" width="20" height="20" viewBox="0 0 20 20"><path d="M5 8 L10 3.5 V6.5 Q16 6.5 16 13 Q16 15 15 16 Q14.5 10.5 10 10.5 V13 Z" fill="#999"/></svg>
<svg style="left:81px;top:48px" width="20" height="20" viewBox="0 0 20 20"><path d="M15 8 L10 3.5 V6.5 Q4 6.5 4 13 Q4 15 5 16 Q5.5 10.5 10 10.5 V13 Z" fill="#999"/></svg>
<svg style="left:120px;top:48px" width="20" height="20" viewBox="0 0 20 20"><path d="M3 16 L4 12 L14 2 L17 5 L7 15 Z M4 12 L7 15" fill="none" stroke="#333" stroke-width="1.3" stroke-linejoin="round"/><path d="M1 18 H19" stroke="#2a62b8" stroke-width="1.2"/></svg>
<svg style="left:209px;top:48px" width="20" height="20" viewBox="0 0 20 20"><path d="M1.5 3.5 L3.5 1.5 H17.5 V16.5 L15.5 18.5 H1.5 Z M1.5 3.5 H15.5 V18.5 M15.5 3.5 L17.5 1.5" fill="none" stroke="#444" stroke-width="1.3" stroke-linejoin="round"/><rect x="6" y="7" width="9" height="10" fill="#777"/><path d="M6 7 H15 V17" fill="none" stroke="#444" stroke-width="1"/></svg>
<svg style="left:243px;top:48px" width="20" height="20" viewBox="0 0 20 20"><path d="M10 2 A8 8 0 1 0 17 14 Q14 14 13.5 11.5 L10 10 L13.5 8.5 Q14 6 17 6 A8 8 0 0 0 10 2 Z" fill="#777" stroke="#444" stroke-width="1"/><ellipse cx="15" cy="6" rx="2" ry="2.5" fill="#fff" stroke="#444" stroke-width="0.8"/><ellipse cx="15" cy="14" rx="2" ry="2.5" fill="#fff" stroke="#444" stroke-width="0.8"/><path d="M8 10 H19" stroke="#444" stroke-width="0.9" stroke-dasharray="1.5 1"/></svg>
<svg style="left:277px;top:48px" width="20" height="20" viewBox="0 0 20 20"><path d="M2 17 Q1 11 6 10 Q11 9.5 11.5 6 Q12 3 15 3 L18 4 Q17 8 16 9 Q15 14 8 15 Q6 15.5 6 17 Z" fill="#777" stroke="#444" stroke-width="1"/><ellipse cx="16.3" cy="3.5" rx="2.5" ry="1.8" fill="#fff" stroke="#444" stroke-width="1"/></svg>
<svg style="left:315px;top:48px" width="20" height="20" viewBox="0 0 20 20"><path d="M2.5 17.5 V8 Q2.5 2.5 9 2.5 H16 L17.5 4 V17.5 Z M2.5 17.5 L3.5 18.5 H17.5" fill="none" stroke="#444" stroke-width="1.3" stroke-linejoin="round"/><path d="M5 16 V9 Q5 5 9 5 H15.5" fill="none" stroke="#999" stroke-width="2"/></svg>
<svg style="left:340px;top:48px" width="20" height="20" viewBox="0 0 20 20"><path d="M5 8 L10 13 L15 8" fill="none" stroke="#333" stroke-width="1.8"/></svg>
<svg style="left:367px;top:48px" width="20" height="20" viewBox="0 0 20 20"><path d="M1.5 17.5 V7 L6.5 2 H17 L18.5 3.5 V17.5 Z" fill="none" stroke="#444" stroke-width="1.3" stroke-linejoin="round"/><path d="M1.5 7 L8 7 L18.5 3.5 M8 7 V17.5" fill="none" stroke="#444" stroke-width="1"/><path d="M2.5 7 L7 2.5 H11 L7.5 6.5 Z" fill="#888"/></svg>
<svg style="left:401px;top:48px" width="20" height="20" viewBox="0 0 20 20"><path d="M1.5 3.5 L3.5 1.5 H18.5 V17 L16.5 19 H1.5 Z M1.5 3.5 H16.5 V19" fill="none" stroke="#444" stroke-width="1.3" stroke-linejoin="round"/><path d="M4.5 5.5 V16 H14 V5.5 H11.5 V13.5 H7 V5.5 Z" fill="#888" stroke="#555" stroke-width="0.8"/></svg>
<svg style="left:435px;top:48px" width="20" height="20" viewBox="0 0 20 20"><path d="M1.5 3.5 L3.5 1.5 H18.5 V17 L16.5 19 H1.5 Z M1.5 3.5 H16.5 V19" fill="none" stroke="#444" stroke-width="1.3" stroke-linejoin="round"/><circle cx="9.5" cy="11" r="5" fill="#777" stroke="#444" stroke-width="1"/><circle cx="8.3" cy="9.8" r="2" fill="#bbb"/></svg>
<svg style="left:469px;top:48px" width="20" height="20" viewBox="0 0 20 20"><ellipse cx="10" cy="3.5" rx="6" ry="2" fill="#fff" stroke="#444" stroke-width="1.1"/><path d="M4 3.5 V16.5 Q10 20 16 16.5 V3.5" fill="#fff" stroke="#444" stroke-width="1.1"/><path d="M4 6.5 Q10 9 16 6.5 M4 9 Q10 11.5 16 9 M4 11.5 Q10 14 16 11.5 M4 14 Q10 16.5 16 14" fill="none" stroke="#777" stroke-width="1.2"/></svg>
<svg style="left:503px;top:48px" width="20" height="20" viewBox="0 0 20 20"><path d="M1.5 6 L9 2.5 L18.5 5 V14.5 L11 18.5 L1.5 15.5 Z" fill="#888" stroke="#444" stroke-width="1.1"/><path d="M1.5 6 L11 8.5 L18.5 5 M11 8.5 V18.5" fill="none" stroke="#444" stroke-width="1"/><path d="M3 7 L10 9 V17 L3 15 Z" fill="#bbb"/><path d="M12.5 7 V13 M10.5 11 L12.5 13.5 L14.5 11" fill="none" stroke="#111" stroke-width="1.6"/></svg>
<svg style="left:528px;top:48px" width="20" height="20" viewBox="0 0 20 20"><path d="M5 8 L10 13 L15 8" fill="none" stroke="#333" stroke-width="1.8"/></svg>
<svg style="left:559px;top:48px" width="20" height="20" viewBox="0 0 20 20"><rect x="1.5" y="1.5" width="7.5" height="7.5" fill="#fff" stroke="#444" stroke-width="1.1"/><rect x="11" y="1.5" width="7.5" height="7.5" fill="#888" stroke="#444" stroke-width="1.1"/><rect x="1.5" y="11" width="7.5" height="7.5" fill="#888" stroke="#444" stroke-width="1.1"/><rect x="11" y="11" width="7.5" height="7.5" fill="#888" stroke="#444" stroke-width="1.1"/></svg>
<svg style="left:584px;top:48px" width="20" height="20" viewBox="0 0 20 20"><path d="M5 8 L10 13 L15 8" fill="none" stroke="#333" stroke-width="1.8"/></svg>
<svg style="left:611px;top:48px" width="20" height="20" viewBox="0 0 20 20"><path d="M2 3 L4 1.5 H8 V9 L5 12 V18.5 H2 Z" fill="#fff" stroke="#444" stroke-width="1.1"/><path d="M12 1.5 H17 L18.5 3 V18.5 H10 V11 L13 8 Z" fill="#888" stroke="#444" stroke-width="1.1"/></svg>
<svg style="left:649px;top:48px" width="20" height="20" viewBox="0 0 20 20"><circle cx="7.5" cy="10" r="6.5" fill="#fff" stroke="#444" stroke-width="1.2"/><circle cx="12.5" cy="10" r="6.5" fill="none" stroke="#444" stroke-width="1.2"/><path d="M10 4 A6.5 6.5 0 0 1 10 16 A6.5 6.5 0 0 1 10 4 Z" fill="#999"/></svg>
<svg style="left:683px;top:48px" width="20" height="20" viewBox="0 0 20 20"><rect x="1.5" y="9.5" width="8" height="9" fill="#fff" stroke="#444" stroke-width="1.1"/><path d="M14 1 L19 6.5 L14 12 L9 6.5 Z" fill="#888" stroke="#444" stroke-width="1"/><path d="M3 7 Q4 3 8 2 M7 1 L8.5 2 L7.5 3.5 M17 13 Q16 17 12.5 18 M12 16.5 L12 18.5 L14 18.5" fill="none" stroke="#333" stroke-width="1.2"/></svg>
<svg style="left:708px;top:48px" width="20" height="20" viewBox="0 0 20 20"><path d="M5 8 L10 13 L15 8" fill="none" stroke="#333" stroke-width="1.8"/></svg>
<svg style="left:739px;top:48px" width="20" height="20" viewBox="0 0 20 20"><path d="M2 2 L18 4.5 V18.5 L2 16 Z" fill="#ddd" stroke="#444" stroke-width="1.2"/><path d="M10 3.2 V10.5 H18" fill="none" stroke="#444" stroke-width="1"/><path d="M2.5 2.5 L9.5 3.5 V10.5 H17.5 V18 L2.5 15.5 Z" fill="#fff" opacity="0.6"/></svg>
<svg style="left:773px;top:48px" width="20" height="20" viewBox="0 0 20 20"><circle cx="10" cy="10" r="8.3" fill="none" stroke="#444" stroke-width="1.2"/><circle cx="10" cy="10" r="6.3" fill="none" stroke="#444" stroke-width="1.1"/><path d="M10 4 V10 H16" fill="none" stroke="#444" stroke-width="1.2"/></svg>
<svg style="left:807px;top:48px" width="20" height="20" viewBox="0 0 20 20"><path d="M2 12 H8 V7 H13 V2 H18 V16 L16 18 H2 Z M2 12 L4 14 V18 M4 14 H16 V18" fill="#fff" stroke="#444" stroke-width="1.1"/><path d="M5 3 Q9 3 10.5 7 M8.5 7.5 L10.8 8 L11.5 5.5" fill="none" stroke="#222" stroke-width="1.4"/><path d="M4.5 14 H16 V17.5 H4.5 Z" fill="#ccc"/></svg>
<div class="t" style="left:838px;top:49px;font-size:17px;color:#222;font-weight:bold;font-family:'Liberation Serif',serif"><span style="font-family:'Liberation Sans'">(</span><i>x</i><span style="font-family:'Liberation Sans'">)</span></div>
<div class="t" style="left:873px;top:49px;font-size:17px;color:#222;font-weight:bold">(&nbsp;&nbsp;&nbsp;)</div>
<svg style="left:875px;top:49px" width="20" height="20" viewBox="0 0 20 20"><circle cx="9" cy="9" r="3.5" fill="none" stroke="#333" stroke-width="1.6"/><path d="M11.5 11.5 L14 14" stroke="#333" stroke-width="1.8"/></svg>
<svg style="left:909px;top:48px" width="20" height="20" viewBox="0 0 20 20"><path d="M7 1.5 L10 0.5 L13 1.5 V5 L10 6 L7 5 Z M7 1.5 L10 2.5 L13 1.5 M10 2.5 V6 M2.5 8.5 L5.5 7.5 L8.5 8.5 V12 L5.5 13 L2.5 12 Z M2.5 8.5 L5.5 9.5 L8.5 8.5 M5.5 9.5 V13 M11.5 8.5 L14.5 7.5 L17.5 8.5 V12 L14.5 13 L11.5 12 Z M11.5 8.5 L14.5 9.5 L17.5 8.5 M14.5 9.5 V13 M7 14.5 L10 13.5 L13 14.5 V18 L10 19 L7 18 Z M7 14.5 L10 15.5 L13 14.5 M10 15.5 V19 M10 6 V7.5 M8.5 12 V14.5 M11.5 12 V14.5" fill="#fff" stroke="#555" stroke-width="0.9"/></svg>
<svg style="left:947px;top:48px" width="20" height="20" viewBox="0 0 20 20"><path d="M10 1.5 L18 5 V14.5 L10 18.5 L2 14.5 V5 Z" fill="#f2f2f2" stroke="#444" stroke-width="1.2"/><path d="M2 5 L10 9 L18 5 M10 9 V18.5" fill="none" stroke="#444" stroke-width="1.1"/><path d="M10 9 L18 5 V14.5 L10 18.5 Z" fill="#ddd"/></svg>
<svg style="left:981px;top:48px" width="20" height="20" viewBox="0 0 20 20"><path d="M1.5 7 L17.5 6 L18 9 L19.5 10.5 L18 12.5 L18.5 18 L2.5 19 L2 15.5 L0.5 14 L2 12 Z" fill="#333"/><circle cx="6" cy="12.5" r="2.7" fill="none" stroke="#e8e8e8" stroke-width="1.7"/><circle cx="13.5" cy="11.8" r="2.7" fill="none" stroke="#e8e8e8" stroke-width="1.7"/><path d="M10.5 17 L13 15.5" stroke="#e8e8e8" stroke-width="1.1"/><path d="M6 2.5 L7 6 M10 1.5 V6 M14 2.5 L13 6" stroke="#444" stroke-width="1.3"/><path d="M4.5 2 H7.5 M8.5 1.5 H11.5 M12.5 2 H15.5" stroke="#444" stroke-width="1"/></svg>
<svg style="left:1015px;top:48px" width="20" height="20" viewBox="0 0 20 20"><rect x="1" y="1" width="18" height="18" fill="none" stroke="#eee" stroke-width="1"/><circle cx="6" cy="5.5" r="3.3" fill="none" stroke="#bbb" stroke-width="1.3"/><circle cx="14" cy="14.5" r="2.6" fill="none" stroke="#bbb" stroke-width="1.3"/><path d="M8 8 L12 12" stroke="#bbb" stroke-width="1.3"/></svg>
<svg style="left:1049px;top:48px" width="20" height="20" viewBox="0 0 20 20"><path d="M1.5 7 L17.5 6 L18 9 L19.5 10.5 L18 12.5 L18.5 18 L2.5 19 L2 15.5 L0.5 14 L2 12 Z" fill="#333"/><circle cx="6" cy="12.5" r="2.7" fill="none" stroke="#e8e8e8" stroke-width="1.7"/><circle cx="13.5" cy="11.8" r="2.7" fill="none" stroke="#e8e8e8" stroke-width="1.7"/><path d="M10.5 17 L13 15.5" stroke="#e8e8e8" stroke-width="1.1"/><path d="M6 2.5 L7 6 M10 1.5 V6 M14 2.5 L13 6" stroke="#444" stroke-width="1.3"/><path d="M4.5 2 H7.5 M8.5 1.5 H11.5 M12.5 2 H15.5" stroke="#444" stroke-width="1"/></svg>
<svg style="left:1083px;top:48px" width="20" height="20" viewBox="0 0 20 20"><path d="M2 4 L4 2 H18 V16 L16 18 H2 Z" fill="#999" stroke="#666" stroke-width="1"/><rect x="4" y="4.5" width="6" height="6" fill="#888"/><rect x="10" y="4.5" width="6" height="6" fill="#aaa"/><rect x="4" y="10.5" width="6" height="6" fill="#777"/><rect x="10" y="10.5" width="6" height="6" fill="#999"/></svg>
<svg style="left:1117px;top:48px" width="20" height="20" viewBox="0 0 20 20"><path d="M2 18.5 H18.5 V15.5 H15.5 Q18 13 17.5 9.5 L19 6 L17 2 L15.5 4.5 Q13 2.5 10 2.5 Q7 2.5 4.5 4.5 L3 2 L1 6 L2.5 9.5 Q2 13 4.5 15.5 H2 Z" fill="#333"/><ellipse cx="10" cy="9.8" rx="4.5" ry="4.8" fill="#fff"/></svg>
<svg style="left:1151px;top:48px" width="20" height="20" viewBox="0 0 20 20"><path d="M8.5 1 H11.5 L12 3.5 L14.3 4.5 L16.4 3 L18.5 5.1 L17 7.2 L18 9.5 L20 10 V12.3 L18 12.8 L17 15 L18.5 17.2 L16.4 19.3 L14.3 17.8 L12 18.8 L11.5 21 H8.5 L8 18.8 L5.7 17.8 L3.6 19.3 L1.5 17.2 L3 15 L2 12.8 L0 12.3 V10 L2 9.5 L3 7.2 L1.5 5.1 L3.6 3 L5.7 4.5 L8 3.5 Z" transform="translate(0.5,-0.5) scale(0.95)" fill="#444"/><circle cx="10" cy="10" r="3" fill="#fff"/></svg>
<svg style="left:1185px;top:48px" width="20" height="20" viewBox="0 0 20 20"><path d="M4 2 H16 L10 11 Z" fill="#aaa" stroke="#666" stroke-width="0.8"/><path d="M10 11 V15 M4 16 H16 M4 18.5 H16" stroke="#555" stroke-width="1.6"/></svg>
<svg style="left:1223px;top:48px" width="20" height="20" viewBox="0 0 20 20"><path d="M3 9 H17 L14 17 H6 Z" fill="#333"/><path d="M3 9 L6 2 M17 9 Q19 13 18 16" fill="none" stroke="#333" stroke-width="1.4"/><path d="M5 3 L15 9" stroke="#333" stroke-width="1.2"/><circle cx="18" cy="17" r="1.5" fill="#333"/></svg>
<div class="a" style="left:1258px;top:49px;width:19px;height:18px;border:1px solid #666;border-radius:3px;font-size:10px;line-height:16px;text-align:center;color:#333">SM</div>
<svg style="left:1291px;top:48px" width="20" height="20" viewBox="0 0 20 20"><path d="M1.5 6 L17 3 L18.5 14 L3 17 Z" fill="#fff" stroke="#333" stroke-width="1.3"/><path d="M2 6 L17.5 3 L18 6.5 L2.5 9.5 Z" fill="#333"/></svg>
<div class="a" style="left:1326px;top:49px;width:19px;height:18px;border:1px solid #666;border-radius:3px;font-size:10px;line-height:16px;text-align:center;color:#333">Ai</div>
<div class="a" style="left:1360px;top:49px;width:19px;height:18px;border:1px solid #666;border-radius:3px;font-size:10px;line-height:16px;text-align:center;color:#333">Ds</div>
<svg style="left:1396px;top:48px" width="20" height="20" viewBox="0 0 20 20"><path d="M3 4 Q3 2 6 2 H10 V12 L13 9 V2 H15 Q17 2 17 5 V16 Q17 18 14 18 H6 Q3 18 3 15 Z" fill="#ddd" stroke="#444" stroke-width="1.1"/><path d="M6 2 V16 H14 V9" fill="none" stroke="#444" stroke-width="1"/><path d="M6 12 L13 16 V18 H6 Z" fill="#888"/></svg>
<svg style="left:1431px;top:48px" width="20" height="20" viewBox="0 0 20 20"><path d="M2 14 L9 12 V3 L14 1.5 Q17 3 17 6 V15 L10 18 H3 Z" fill="#ccc" stroke="#444" stroke-width="1.1"/><path d="M2 14 L10 15.5 L17 13" fill="none" stroke="#444" stroke-width="1"/><path d="M10 15.5 V18" stroke="#444"/><path d="M9.5 3 L14 1.8 V13 L9.5 14 Z" fill="#999"/></svg>
<svg style="left:1465px;top:48px" width="20" height="20" viewBox="0 0 20 20"><path d="M1.5 10 L7 8 L10.5 11 L14 5 L18.5 9 L13 13.5 L9 12.5 L4.5 14 Z" fill="#ccc" stroke="#444" stroke-width="1.1"/><path d="M3 5 L16 17" stroke="#444" stroke-width="1.2"/></svg>
<svg style="left:1499px;top:48px" width="20" height="20" viewBox="0 0 20 20"><path d="M3 11 H7 V4 L9 2 H17 V18 H3 Z" fill="#ddd" stroke="#444" stroke-width="1.2"/><path d="M9 2 V14 H3" fill="none" stroke="#444" stroke-width="1.1"/><path d="M3.5 14 H9 V17.5 H3.5 Z M9.5 2.5 H12 V10 H9.5 Z" fill="#888"/></svg>
<svg style="left:1532px;top:48px" width="20" height="20" viewBox="0 0 20 20"><path d="M2 18 V6 L6 2 H18 V18" fill="#eee" stroke="#444" stroke-width="1.2"/><path d="M2 6 L6 2 H2.5 Z" fill="#888"/><path d="M2.5 5.5 L6 2.5 L8 2.5 L2.5 8 Z" fill="#999"/></svg>
<svg style="left:1567px;top:48px" width="20" height="20" viewBox="0 0 20 20"><path d="M2 4 Q2 2 4 2 H12 M17 9 V15 Q17 18 14 18 H5 Q2 18 2 15 V4" fill="#eee" stroke="#444" stroke-width="1.2"/><path d="M5 4 V16 H13 V10" fill="none" stroke="#444" stroke-width="1"/><path d="M9 7 L12 10 L18 2" fill="none" stroke="#222" stroke-width="1.8"/></svg>
<svg style="left:1602px;top:48px" width="20" height="20" viewBox="0 0 20 20"><path d="M1.5 3 H16.5 V9 H9 Q6 9 6 12 Q6 15 9 15 H17 V19 M15 15 V19" fill="none" stroke="#444" stroke-width="1.3"/><path d="M1.5 5 H14.5 V7" fill="none" stroke="#444" stroke-width="1"/></svg>
<svg style="left:1639px;top:48px" width="20" height="20" viewBox="0 0 20 20"><rect x="1.5" y="1.5" width="17" height="17" rx="3" fill="none" stroke="#333" stroke-width="1.3" stroke-dasharray="3 2.2"/><path d="M10 6 V14 M6 10 H14" stroke="#222" stroke-width="1.8"/></svg>
<div class="sep" style="left:110px"></div>
<div class="sep" style="left:199px"></div>
<div class="sep" style="left:306px"></div>
<div class="sep" style="left:550px"></div>
<div class="sep" style="left:640px"></div>
<div class="sep" style="left:730px"></div>
<div class="sep" style="left:938px"></div>
<div class="sep" style="left:1213px"></div>
<div class="sep" style="left:1388px"></div>
<div class="sep" style="left:1630px"></div>
<div class="t" style="left:144.5px;top:51.8px;font-size:14.3px;color:#333">Sketch</div>
<div class="a" style="left:1677px;top:43px;width:160px;height:31px;background:#efefef;border-radius:4px"></div>
<div class="t" style="left:1687px;top:51px;font-size:14.5px;color:#333">Search tools...</div>
<div class="a" style="left:1777px;top:50px;width:33px;height:17px;border:1px solid #aaa;border-radius:2px;background:#f7f7f7;font-size:11px;line-height:15px;text-align:center;color:#444">alt/&#8997;</div>
<div class="a" style="left:1811px;top:50px;width:17px;height:17px;border:1px solid #aaa;border-radius:2px;background:#f7f7f7;font-size:11px;line-height:15px;text-align:center;color:#444">c</div>
<svg style="left:10px;top:83px" width="22" height="22" viewBox="0 0 22 22"><path d="M7 2 V4.5 M7 6.5 V8 M7 15 V16.5 M7 18.5 V20" stroke="#222" stroke-width="1.6"/><circle cx="7" cy="11.5" r="3" fill="#333"/><path d="M14.5 10 V18 M10.5 14 H18.5" stroke="#1f5fbf" stroke-width="2.2"/></svg>
<svg style="left:9px;top:117px" width="22" height="20" viewBox="0 0 22 20"><path d="M11 2 Q20 2 20 8 Q20 13.5 11 13.5 Q9 13.5 7.5 13 L3 17 L4.5 12 Q2 10.5 2 8 Q2 2 11 2 Z" fill="#222"/></svg>
<svg style="left:10px;top:151px" width="20" height="22" viewBox="0 0 20 22"><rect x="1.5" y="2" width="13" height="17" rx="2" fill="none" stroke="#222" stroke-width="1.6"/><path d="M4 6 H12 M4 9 H11 M4 12 H8" stroke="#222" stroke-width="1.4"/><path d="M9 16 L10 13 L17 5 L19 7 L12 15 Z" fill="#222"/></svg>
<svg style="left:9px;top:187px" width="22" height="22" viewBox="0 0 22 22"><circle cx="12" cy="12" r="7" fill="none" stroke="#222" stroke-width="1.8"/><path d="M9.5 3 H14.5 M12 3 V5 M17.5 5.5 L19 4" stroke="#222" stroke-width="1.6"/><path d="M12 12 L14.5 9" stroke="#222" stroke-width="1.6"/><path d="M1 10 H5 M0.5 12.5 H4.5 M1.5 15 H5" stroke="#222" stroke-width="1"/></svg>
<div class="a" style="left:0;top:216px;width:39px;height:1px;background:#d8d8d8"></div>
<svg style="left:10px;top:223px" width="20" height="22" viewBox="0 0 20 22"><rect x="1.5" y="1.5" width="16" height="18" rx="2" fill="none" stroke="#222" stroke-width="1.6"/><path d="M4 6 L5.3 7.5 L7.5 4.5 M4 10.5 L5.3 12 L7.5 9 M4 15 L5.3 16.5 L7.5 13.5" fill="none" stroke="#222" stroke-width="1"/><path d="M9.5 6 H15 M9.5 10.5 H15 M9.5 15 H15" stroke="#222" stroke-width="2"/></svg>
<svg style="left:9px;top:1056px" width="22" height="18" viewBox="0 0 22 18"><path d="M1 2 H17 V8" fill="none" stroke="#222" stroke-width="2"/><rect x="1" y="2" width="16" height="9" fill="#222"/><circle cx="12" cy="10" r="4" fill="#f6f6f6" stroke="#222" stroke-width="1.8"/><path d="M15 13 L18.5 16.5" stroke="#222" stroke-width="2"/></svg>
<svg style="left:49px;top:92px" width="18" height="16" viewBox="0 0 18 16"><path d="M1.5 1.5 H16 L10.5 8 V14.5 L8 13 V8 Z" fill="none" stroke="#333" stroke-width="1.3" stroke-linejoin="round"/></svg>
<div class="a" style="left:79px;top:84px;width:158px;height:30px;border:1px solid #c8c8c8;border-radius:4px;background:#fff"></div>
<div class="t" style="left:86.0px;top:94.99px;font-size:12.3px;color:#9a9a9a;font-style:italic">Filter by name or type</div>
<div class="t" style="left:44.0px;top:123.83px;font-size:13.2px;color:#333;">Features (12)</div>
<svg style="left:145px;top:122px" width="20" height="16" viewBox="0 0 20 16"><path d="M1.5 2 H7 L8.5 4 H18.5 V14.5 H1.5 Z" fill="none" stroke="#999" stroke-width="1.1"/><path d="M7 6.5 V13 M3.8 9.8 H10.2" stroke="#7f9ee0" stroke-width="1.8"/></svg>
<div class="a" style="left:179px;top:123px;width:4px;height:14px;background:#999"></div><div class="a" style="left:187px;top:123px;width:4px;height:14px;background:#999"></div>
<svg style="left:205px;top:120px" width="20" height="20" viewBox="0 0 20 20"><circle cx="10" cy="11.5" r="6.8" fill="none" stroke="#222" stroke-width="1.6"/><path d="M7.5 2 H12.5 M10 2 V4.5 M15 4.8 L16.5 3.5" stroke="#222" stroke-width="1.5"/><path d="M10 11.5 L12 14" stroke="#222" stroke-width="1.4"/></svg>
<svg style="left:43px;top:151px" width="14" height="9" viewBox="0 0 14 9"><path d="M1.5 1.5 L7 7 L12.5 1.5" fill="none" stroke="#555" stroke-width="1.6"/></svg>
<div class="t" style="left:63.5px;top:150.74px;font-size:13.3px;color:#333;">Default geometry</div>
<div class="a" style="left:49px;top:170px;width:1px;height:106px;background:#cfcfcf"></div>
<div class="a" style="left:45px;top:275px;width:9px;height:1px;background:#cfcfcf"></div>
<svg style="left:68px;top:178px" width="9" height="9" viewBox="0 0 9 9"><circle cx="4.5" cy="4.5" r="3.6" fill="none" stroke="#777" stroke-width="1"/><circle cx="4.5" cy="4.5" r="1.6" fill="#777"/></svg>
<div class="t" style="left:85.5px;top:176.83px;font-size:13.2px;color:#333;">Origin</div>
<svg style="left:65px;top:200px" width="16" height="17" viewBox="0 0 16 17"><path d="M1.5 1 L14 2.7 V15.5 L1.5 13.8 Z" fill="#ddd" stroke="#555" stroke-width="1"/><path d="M8 2 V8.8 H14" fill="none" stroke="#555" stroke-width="1"/><path d="M2.5 2.2 L7.5 2.8 V9.5 H13 V14.5 L2.5 13 Z" fill="#e8e8e8"/></svg>
<div class="t" style="left:85.5px;top:202.83px;font-size:13.2px;color:#333;">Top</div>
<svg style="left:65px;top:226px" width="16" height="17" viewBox="0 0 16 17"><path d="M1.5 1 L14 2.7 V15.5 L1.5 13.8 Z" fill="#ddd" stroke="#555" stroke-width="1"/><path d="M8 2 V8.8 H14" fill="none" stroke="#555" stroke-width="1"/><path d="M2.5 2.2 L7.5 2.8 V9.5 H13 V14.5 L2.5 13 Z" fill="#e8e8e8"/></svg>
<div class="t" style="left:85.5px;top:228.83px;font-size:13.2px;color:#333;">Front</div>
<svg style="left:65px;top:252px" width="16" height="17" viewBox="0 0 16 17"><path d="M1.5 1 L14 2.7 V15.5 L1.5 13.8 Z" fill="#ddd" stroke="#555" stroke-width="1"/><path d="M8 2 V8.8 H14" fill="none" stroke="#555" stroke-width="1"/><path d="M2.5 2.2 L7.5 2.8 V9.5 H13 V14.5 L2.5 13 Z" fill="#e8e8e8"/></svg>
<div class="t" style="left:85.5px;top:254.83px;font-size:13.2px;color:#333;">Right</div>
<svg style="left:46px;top:279px" width="16" height="16" viewBox="0 0 16 16"><path d="M2 13 L3 9.5 L11 1.5 L13.5 4 L5.5 12 Z M3 9.5 L5.5 12" fill="none" stroke="#aaa" stroke-width="1.1" stroke-linejoin="round"/><path d="M0.5 15 H15" stroke="#aaa" stroke-width="1"/></svg>
<div class="t" style="left:66.0px;top:280.83px;font-size:13.2px;color:#999;">Layout</div>
<svg style="left:46px;top:305px" width="16" height="16" viewBox="0 0 16 16"><path d="M2 13 L3 9.5 L11 1.5 L13.5 4 L5.5 12 Z M3 9.5 L5.5 12" fill="none" stroke="#aaa" stroke-width="1.1" stroke-linejoin="round"/><path d="M0.5 15 H15" stroke="#aaa" stroke-width="1"/></svg>
<div class="t" style="left:66.0px;top:306.83px;font-size:13.2px;color:#999;">Plate</div>
<div class="a" style="left:40px;top:327px;width:199px;height:23px;background:#eceff2;border-bottom:1.5px solid #9ccaf0"></div>
<div class="a" style="left:40px;top:353px;width:199px;height:24px;background:#b2daf6"></div>
<svg style="left:46px;top:331px" width="16" height="16" viewBox="0 0 16 16"><path d="M1.5 3 L3 1.5 H14.5 V13 L13 14.5 H1.5 Z M1.5 3 H13 V14.5 M13 3 L14.5 1.5" fill="#fff" stroke="#555" stroke-width="1.1"/><rect x="5" y="6" width="7" height="7.5" fill="#888" stroke="#555" stroke-width="0.8"/></svg>
<div class="t" style="left:66.0px;top:332.83px;font-size:13.2px;color:#333;">Plate</div>
<svg style="left:45px;top:356px" width="18" height="17" viewBox="0 0 18 17"><path d="M1 5 L15 4 L15.5 7 L17 8 L15.5 10 L16 15 L2 16 L1.5 13 L0 11.5 L1.5 9.5 Z" fill="#333"/><circle cx="5" cy="10" r="2.4" fill="none" stroke="#e6e6e6" stroke-width="1.5"/><circle cx="11.5" cy="9.3" r="2.4" fill="none" stroke="#e6e6e6" stroke-width="1.5"/><path d="M9 14 L11 12.8" stroke="#e6e6e6" stroke-width="1"/><path d="M5 1 L6 4 M8.5 0.5 V4 M12 1 L11 4" stroke="#333" stroke-width="1.1"/></svg>
<div class="t" style="left:66.0px;top:358.91px;font-size:13.1px;color:#222;font-weight:bold">Plate Spacer</div>
<svg style="left:197px;top:357px" width="6" height="17" viewBox="0 0 6 17"><path d="M3 0.5 V5 M3 11.5 V16" stroke="#333" stroke-width="1.6" stroke-dasharray="1.7 1.3"/><circle cx="3" cy="8.2" r="2.7" fill="#333"/></svg>
<svg style="left:197px;top:383px" width="6" height="17" viewBox="0 0 6 17"><path d="M3 0.5 V5 M3 11.5 V16" stroke="#333" stroke-width="1.6" stroke-dasharray="1.7 1.3"/><circle cx="3" cy="8.2" r="2.7" fill="#333"/></svg>
<svg style="left:197px;top:409px" width="6" height="17" viewBox="0 0 6 17"><path d="M3 0.5 V5 M3 11.5 V16" stroke="#333" stroke-width="1.6" stroke-dasharray="1.7 1.3"/><circle cx="3" cy="8.2" r="2.7" fill="#333"/></svg>
<svg style="left:197px;top:461px" width="6" height="17" viewBox="0 0 6 17"><path d="M3 0.5 V5 M3 11.5 V16" stroke="#333" stroke-width="1.6" stroke-dasharray="1.7 1.3"/><circle cx="3" cy="8.2" r="2.7" fill="#333"/></svg>
<svg style="left:45px;top:382px" width="18" height="17" viewBox="0 0 18 17"><path d="M1 5 L15 4 L15.5 7 L17 8 L15.5 10 L16 15 L2 16 L1.5 13 L0 11.5 L1.5 9.5 Z" fill="#a8a8a8"/><circle cx="5" cy="10" r="2.4" fill="none" stroke="#f2f2f2" stroke-width="1.5"/><circle cx="11.5" cy="9.3" r="2.4" fill="none" stroke="#f2f2f2" stroke-width="1.5"/><path d="M9 14 L11 12.8" stroke="#f2f2f2" stroke-width="1"/><path d="M5 1 L6 4 M8.5 0.5 V4 M12 1 L11 4" stroke="#a8a8a8" stroke-width="1.1"/></svg>
<div class="t" style="left:66.0px;top:384.83px;font-size:13.2px;color:#999;font-style:italic">Inter Shaft</div>
<svg style="left:45px;top:408px" width="18" height="17" viewBox="0 0 18 17"><path d="M1 5 L15 4 L15.5 7 L17 8 L15.5 10 L16 15 L2 16 L1.5 13 L0 11.5 L1.5 9.5 Z" fill="#a8a8a8"/><circle cx="5" cy="10" r="2.4" fill="none" stroke="#f2f2f2" stroke-width="1.5"/><circle cx="11.5" cy="9.3" r="2.4" fill="none" stroke="#f2f2f2" stroke-width="1.5"/><path d="M9 14 L11 12.8" stroke="#f2f2f2" stroke-width="1"/><path d="M5 1 L6 4 M8.5 0.5 V4 M12 1 L11 4" stroke="#a8a8a8" stroke-width="1.1"/></svg>
<div class="t" style="left:66.0px;top:410.83px;font-size:13.2px;color:#999;font-style:italic">Output Shaft</div>
<svg style="left:46px;top:435px" width="16" height="16" viewBox="0 0 16 16"><path d="M2 13 L3 9.5 L11 1.5 L13.5 4 L5.5 12 Z M3 9.5 L5.5 12" fill="none" stroke="#aaa" stroke-width="1.1" stroke-linejoin="round"/><path d="M0.5 15 H15" stroke="#aaa" stroke-width="1"/></svg>
<div class="t" style="left:66.0px;top:436.83px;font-size:13.2px;color:#999;font-style:italic">Pocketing</div>
<svg style="left:46px;top:461px" width="16" height="16" viewBox="0 0 16 16"><path d="M1 15 H15 V12.5 H12.5 Q14.5 10.5 14 7.5 L15.3 5 L13.8 2 L12.5 4 Q10.5 2 8 2 Q5.5 2 3.5 4 L2.2 2 L0.7 5 L2 7.5 Q1.5 10.5 3.5 12.5 H1 Z" fill="#aaa"/><ellipse cx="8" cy="8" rx="3.6" ry="3.9" fill="#fff"/></svg>
<div class="t" style="left:66.0px;top:463.00px;font-size:13.0px;color:#999;font-style:italic">Part Lightening - ? ...</div>
<div class="a" style="left:45px;top:492px;width:190px;height:7px;background:#b3b3b3"></div>
<div class="a" style="left:40px;top:690px;width:200px;height:1px;background:#d4d4d4"></div>
<svg style="left:43px;top:699px" width="14" height="9" viewBox="0 0 14 9"><path d="M1.5 1.5 L7 7 L12.5 1.5" fill="none" stroke="#555" stroke-width="1.6"/></svg>
<div class="t" style="left:63.0px;top:699.00px;font-size:13.0px;color:#333;">Parts (2)</div>
<div class="a" style="left:40px;top:718px;width:200px;height:24px;background:#eceff2;border-bottom:1px solid #9ccaf0"></div>
<svg style="left:65px;top:722px" width="16" height="16" viewBox="0 0 16 16"><path d="M1.5 14.5 V7 L4 5 H8 V1.5 L10 0.5 H14 V12 L11.5 14.5 Z M1.5 7 H6 V14.5 M6 7 L8 5 M8 5 V12 H14 M8 12 L6 14.5" fill="#fff" stroke="#555" stroke-width="1"/></svg>
<div class="t" style="left:85.0px;top:724.08px;font-size:12.9px;color:#333;">Gearbox Plate</div>
<svg style="left:65px;top:748px" width="16" height="16" viewBox="0 0 16 16"><path d="M1.5 14.5 V7 L4 5 H8 V1.5 L10 0.5 H14 V12 L11.5 14.5 Z M1.5 7 H6 V14.5 M6 7 L8 5 M8 5 V12 H14 M8 12 L6 14.5" fill="#fff" stroke="#555" stroke-width="1"/></svg>
<div class="t" style="left:85.0px;top:750.25px;font-size:12.7px;color:#222;font-weight:bold">1.125 In. Round Spacer</div>
<div class="a" style="left:40px;top:1050px;width:33px;height:29px;background:#dedede"></div>
<svg style="left:48px;top:1056px" width="18" height="18" viewBox="0 0 18 18"><path d="M9 2 V16 M2 9 H16" stroke="#555" stroke-width="2.6"/></svg>
<svg style="left:73px;top:1050px" width="170" height="29" viewBox="0 0 170 29"><path d="M1 1.5 Q1 0 3 0 H32 L38 13.5 L32 27 H1 Z" fill="#ececec"/><path d="M37 0 H156 L162 13.5 L156 27 H37 L43 13.5 Z" fill="#fcfcfc"/></svg>
<svg style="left:82px;top:1053px" width="20" height="20" viewBox="0 0 20 20"><path d="M1.5 10 L10 2 L18.5 10 H16 V18.5 H12 V13 H8 V18.5 H4 V10 Z" fill="#666"/><rect x="14" y="3" width="2.5" height="5" fill="#666"/></svg>
<svg style="left:125px;top:1055px" width="20" height="16" viewBox="0 0 20 16"><path d="M1 2 H7 L9 4 H18.5 V14.5 H1 Z" fill="#fff" stroke="#333" stroke-width="1.1"/></svg>
<div class="t" style="left:150.5px;top:1055.95px;font-size:14.0px;color:#555;">Exercise 2</div>
<div class="a" style="left:237px;top:1050px;width:200px;height:27px;background:#ececec;border-radius:3px 3px 0 0"></div>
<svg style="left:248px;top:1056px" width="15" height="15" viewBox="0 0 15 15"><circle cx="7.5" cy="7.5" r="7" fill="#7fa6e0"/><circle cx="7.5" cy="7.5" r="3" fill="#fff"/><path d="M7.5 2 V13" stroke="#fff" stroke-width="1.6"/></svg>
<svg style="left:266px;top:1053px" width="18" height="20" viewBox="0 0 18 20"><path d="M1.5 4 L4 1.5 H15 L17 4 V18.5 H4 L1.5 16 Z" fill="#fff" stroke="#333" stroke-width="1.1"/><path d="M3 3.5 H14 V14 H3 Z" fill="#888"/><path d="M1.5 4 H15 V18.5 M15 4 L17 1.5" fill="none" stroke="#333" stroke-width="1"/></svg>
<div class="t" style="left:288.5px;top:1056.73px;font-size:13.9px;color:#555;">Exercise 2 Assembly</div>
<div class="a" style="left:439px;top:1050px;width:198px;height:29px;background:#fff;border-bottom:2px solid #1f58b5;border-radius:0 0 2px 2px"></div>
<svg style="left:449px;top:1053px" width="18" height="20" viewBox="0 0 18 20"><path d="M1.5 6 L3.5 4.5 H7 V18.5 H1.5 Z M7 4 L9.5 1.5 H16.5 V18.5 H7 M9.5 1.5 V4 H16.5" fill="#fff" stroke="#333" stroke-width="1.1"/><path d="M3.5 4.5 V18.5 M9.5 4 V18.5" stroke="#333" stroke-width="0.9"/></svg>
<div class="t" style="left:471.0px;top:1056.90px;font-size:13.7px;color:#333;">Exercise 2 Part Studio</div>
<svg style="left:1888px;top:1028px" width="22" height="14" viewBox="0 0 22 14"><path d="M2 12 Q2 2 11 2 Q20 2 20 12 Z" fill="none" stroke="#444" stroke-width="1.6"/><path d="M6 12 Q6 6.5 11 6.5 Q16 6.5 16 12" fill="none" stroke="#444" stroke-width="1.4"/><path d="M1 12.5 H21" stroke="#444" stroke-width="1.6"/></svg>
<div class="a" style="left:321px;top:79px;width:220px;height:455px;background:#fff;box-shadow:0 2px 8px rgba(0,0,0,0.22),0 0 1px rgba(0,0,0,0.25)"></div>
<div class="t" style="left:327.0px;top:87.53px;font-size:12.6px;color:#3a3a3a;font-weight:bold">Plate Spacer</div>
<div class="a" style="left:485px;top:80px;width:28px;height:27px;background:#17961c"></div>
<svg style="left:489px;top:85px" width="20" height="17" viewBox="0 0 20 17"><path d="M2.5 8.5 L7.5 13.5 L17.5 3" fill="none" stroke="#fff" stroke-width="2.8"/></svg>
<svg style="left:519px;top:86px" width="15" height="15" viewBox="0 0 15 15"><path d="M2 2 L13 13 M13 2 L2 13" stroke="#c9282d" stroke-width="2.8"/></svg>
<div class="a" style="left:321px;top:107px;width:220px;height:1px;background:#e2e2e2"></div>
<div class="t" style="left:361.5px;top:113.83px;font-size:13.2px;color:#2a5fb0;">Inch</div>
<div class="t" style="left:466.0px;top:113.83px;font-size:13.2px;color:#333;">Metric</div>
<div class="a" style="left:321px;top:133px;width:220px;height:1px;background:#e0e0e0"></div>
<div class="a" style="left:321px;top:131px;width:105px;height:2px;background:#1f58b5"></div>
<div class="a" style="left:324px;top:141px;width:188px;height:44px;background:#d8ecf8;border:1px solid #2c6bc4;border-radius:2px"></div>
<div class="t" style="left:330.0px;top:147.53px;font-size:10.0px;color:#444;">Sketch point to place spacer</div>
<div class="t" style="left:331.0px;top:167.00px;font-size:13.0px;color:#444;">Edge of Plate</div>
<svg style="left:490px;top:168px" width="10" height="10" viewBox="0 0 10 10"><path d="M1.5 1.5 L8.5 8.5 M8.5 1.5 L1.5 8.5" stroke="#555" stroke-width="1.2"/></svg>
<svg style="left:515px;top:143px" width="20" height="20" viewBox="0 0 20 20"><circle cx="10" cy="10" r="8.3" fill="none" stroke="#444" stroke-width="1.2"/><circle cx="10" cy="10" r="6.3" fill="none" stroke="#444" stroke-width="1.1"/><path d="M10 4 V10 H16" fill="none" stroke="#444" stroke-width="1.2"/></svg>
<svg style="left:325px;top:201px" width="13" height="8" viewBox="0 0 13 8"><path d="M1.5 1.5 L6.5 6.5 L11.5 1.5" fill="none" stroke="#555" stroke-width="1.8"/></svg>
<div class="t" style="left:345.0px;top:197.83px;font-size:13.2px;color:#555;">Spacer</div>
<div class="a" style="left:331px;top:217px;width:1px;height:125px;background:#d0d0d0"></div>
<div class="a" style="left:326px;top:342px;width:10px;height:1px;background:#d0d0d0"></div>
<div class="t" style="left:346.0px;top:226.50px;font-size:12.4px;color:#555;">Spacer type</div>
<div class="t" style="left:420.0px;top:222.99px;font-size:13.6px;color:#333;">Round</div>
<svg style="left:499px;top:227px" width="10" height="6" viewBox="0 0 10 6"><path d="M0.5 0.5 H9.5 L5 5 Z" fill="#333"/></svg>
<div class="a" style="left:415px;top:242px;width:100px;height:1px;background:#d6d6d6"></div>
<div class="t" style="left:216.0px;top:251.43px;width:200px;text-align:right;font-size:11.3px;color:#aaa;">Size</div>
<div class="t" style="left:427.0px;top:249.49px;font-size:13.6px;color:#333;">#10</div>
<svg style="left:527px;top:254px" width="10" height="6" viewBox="0 0 10 6"><path d="M0.5 0.5 H9.5 L5 5 Z" fill="#333"/></svg>
<div class="a" style="left:422px;top:266px;width:119px;height:1px;background:#d6d6d6"></div>
<div class="t" style="left:216.0px;top:273.43px;width:200px;text-align:right;font-size:11.3px;color:#aaa;">Fastener fit</div>
<div class="t" style="left:427.0px;top:272.49px;font-size:13.6px;color:#333;">Free</div>
<svg style="left:527px;top:276px" width="10" height="6" viewBox="0 0 10 6"><path d="M0.5 0.5 H9.5 L5 5 Z" fill="#333"/></svg>
<div class="a" style="left:422px;top:289px;width:119px;height:1px;background:#d6d6d6"></div>
<svg style="left:340px;top:291px" width="28" height="24" viewBox="0 0 28 24"><rect x="1" y="5" width="26" height="19" fill="#cfcfcf"/><path d="M8 5 V16 L14 22 L20 16 V5 Z" fill="#fff"/><path d="M8 5 V16 L14 22 L20 16 V5" fill="none" stroke="#888" stroke-width="1"/><path d="M9 5 V13 M19 5 V13" stroke="#2a5fb0" stroke-width="1.4"/><path d="M9 2.5 H19 M9 2.5 L11 1 M9 2.5 L11 4 M19 2.5 L17 1 M19 2.5 L17 4" stroke="#2a5fb0" stroke-width="1"/></svg>
<div class="t" style="left:312.0px;top:298.83px;width:200px;text-align:right;font-size:13.2px;color:#333;">0.201 in</div>
<div class="a" style="left:368px;top:315px;width:146px;height:1px;background:#d6d6d6"></div>
<svg style="left:347px;top:324px" width="8" height="12" viewBox="0 0 8 12"><path d="M1.5 1.5 L6 6 L1.5 10.5" fill="none" stroke="#bbb" stroke-width="1.4"/></svg>
<div class="a" style="left:365px;top:324px;width:12px;height:12px;border:1.2px solid #666;border-radius:2px;background:#fff"></div>
<div class="t" style="left:381.0px;top:324.00px;font-size:13.0px;color:#555;">Custom wall</div>
<svg style="left:325px;top:354px" width="13" height="8" viewBox="0 0 13 8"><path d="M1.5 1.5 L6.5 6.5 L11.5 1.5" fill="none" stroke="#555" stroke-width="1.8"/></svg>
<div class="t" style="left:345.0px;top:350.83px;font-size:13.2px;color:#555;">Extrude</div>
<div class="a" style="left:331px;top:370px;width:1px;height:136px;background:#d0d0d0"></div>
<div class="a" style="left:326px;top:506px;width:10px;height:1px;background:#d0d0d0"></div>
<div class="t" style="left:347.0px;top:376.49px;font-size:13.6px;color:#333;">Blind</div>
<svg style="left:499px;top:380px" width="10" height="6" viewBox="0 0 10 6"><path d="M0.5 0.5 H9.5 L5 5 Z" fill="#333"/></svg>
<div class="a" style="left:341px;top:395px;width:174px;height:1px;background:#d6d6d6"></div>
<svg style="left:518px;top:372px" width="20" height="20" viewBox="0 0 20 20"><path d="M17 3 L5 15" stroke="#222" stroke-width="1.8"/><path d="M2 18 L4 10 L10 16 Z" fill="#222"/><path d="M9 5 L13 2" stroke="#999" stroke-width="1"/></svg>
<div class="t" style="left:346.0px;top:407.50px;font-size:12.4px;color:#555;">Depth</div>
<div class="t" style="left:312.0px;top:406.83px;width:200px;text-align:right;font-size:13.2px;color:#333;">1.125 in</div>
<div class="a" style="left:383px;top:423px;width:131px;height:1px;background:#d6d6d6"></div>
<svg style="left:347px;top:432px" width="8" height="12" viewBox="0 0 8 12"><path d="M1.5 1.5 L6 6 L1.5 10.5" fill="none" stroke="#bbb" stroke-width="1.4"/></svg>
<div class="a" style="left:365px;top:432px;width:12px;height:12px;border:1.2px solid #666;border-radius:2px;background:#fff"></div>
<div class="t" style="left:381.0px;top:432.00px;font-size:13.0px;color:#555;">Starting offset</div>
<div class="a" style="left:345px;top:460px;width:12px;height:12px;border:1.2px solid #666;border-radius:2px;background:#fff"></div>
<div class="t" style="left:361.0px;top:460.00px;font-size:13.0px;color:#555;">Symmetric</div>
<svg style="left:347px;top:487px" width="8" height="12" viewBox="0 0 8 12"><path d="M1.5 1.5 L6 6 L1.5 10.5" fill="none" stroke="#bbb" stroke-width="1.4"/></svg>
<div class="a" style="left:365px;top:487px;width:12px;height:12px;border:1.2px solid #666;border-radius:2px;background:#fff"></div>
<div class="t" style="left:381.0px;top:487.00px;font-size:13.0px;color:#555;">Second end position</div>
<div class="a" style="left:328px;top:520px;width:112px;height:1.5px;background:#555"></div>
<div class="a" style="left:399px;top:514px;width:13px;height:13px;border:1px solid #777;border-radius:50%;background:#fff;box-shadow:0 1px 2px rgba(0,0,0,0.3)"></div>
<div class="a" style="left:466px;top:510px;width:49px;height:22px;border:1px solid #aaa;border-radius:3px;background:#fff;font-size:12.5px;line-height:20px;text-align:center;color:#333">Final</div>
<div class="a" style="left:245px;top:538px;width:33px;height:34px;background:#fff;border:1px solid #c8c8c8;border-left:none"></div>
<svg style="left:252px;top:545px" width="19" height="19" viewBox="0 0 19 19"><path d="M2 4 V17" stroke="#555" stroke-width="1.6"/><path d="M0.5 2 L2 3.5 L3.5 2" fill="none" stroke="#555" stroke-width="1"/><path d="M5.5 3 H17 M5.5 7.5 H17 M5.5 12 H17 M5.5 16.5 H17" stroke="#555" stroke-width="1.2"/></svg>
<svg style="left:1740px;top:80px" width="179" height="180" viewBox="1740 80 179 180">
<path d="M1823 100 L1830 91 L1837 100 Z" fill="#999"/>
<path d="M1823 235 L1830 244 L1837 235 Z" fill="#999"/>
<path d="M1755 166 L1764 159 L1764 173 Z" fill="#999"/>
<path d="M1905 166 L1896 159 L1896 173 Z" fill="#999"/>
<path d="M1808 101 Q1790 107 1782 118" fill="none" stroke="#999" stroke-width="3.6"/>
<path d="M1776 124 L1777 112 L1788 120 Z" fill="#999"/>
<path d="M1851 101 Q1869 107 1877 118" fill="none" stroke="#999" stroke-width="3.6"/>
<path d="M1883 124 L1882 112 L1871 120 Z" fill="#999"/>
<path d="M1806 127 L1826 124 L1862 137 L1869 148 L1867 190 L1846 207 L1818 205 L1796 187 L1792 148 Z" fill="#ececec"/>
<path d="M1806 131 L1827 128 L1856 138 L1842 152 L1813 150 Z" fill="#fff"/>
<path d="M1797 160 L1811 155 L1839 160 L1842 195 L1827 199 L1799 188 Z" fill="#fff"/>
<path d="M1849 161 L1864 148 L1866 185 L1850 197 Z" fill="#fff"/>
<circle cx="1839" cy="160" r="5" fill="#ececec"/>
<text x="0" y="0" transform="translate(1821,139) rotate(22) skewX(-20)" font-size="9" fill="#222" font-family="Liberation Sans" font-style="italic">Top</text>
<text x="0" y="0" transform="translate(1802,178) rotate(9)" font-size="11.5" fill="#222" font-family="Liberation Sans">Front</text>
<text x="0" y="0" transform="translate(1851,182) rotate(-62) skewX(-8)" font-size="9.5" fill="#222" font-family="Liberation Sans" font-style="italic">Right</text>
<path d="M1788.5 147 V198" stroke="#3a3ad0" stroke-width="1.2"/>
<path d="M1788.5 198 L1839 213" stroke="#e04040" stroke-width="1.2"/>
<path d="M1788.5 198 L1813 176" stroke="#5cb85c" stroke-width="0.9"/>
<text x="1783" y="144" font-size="11" fill="#5555dd" font-family="Liberation Sans">Z</text>
<text x="1844" y="218" font-size="11" fill="#e06666" font-family="Liberation Sans">X</text>
<path d="M1866 227 L1875 223 L1884 227 V237 L1875 241 L1866 237 Z" fill="#ddd" stroke="#333" stroke-width="1"/>
<path d="M1866 227 L1875 231 L1884 227 M1875 231 V241" fill="none" stroke="#333" stroke-width="0.9"/>
<path d="M1866.5 227.5 L1875 231 V240.5 L1866.5 236.5 Z" fill="#999"/>
<path d="M1892 230 H1901 L1896.5 235 Z" fill="#222"/>
</svg>
<div class="a" style="left:1888px;top:433px;width:32px;height:133px;border:1px solid #c4c4c4;border-right:none;background:#fff"></div>
<div class="a" style="left:1888px;top:466px;width:31px;height:1px;background:#c4c4c4"></div>
<div class="a" style="left:1888px;top:499px;width:31px;height:1px;background:#c4c4c4"></div>
<div class="a" style="left:1888px;top:532px;width:31px;height:1px;background:#c4c4c4"></div>
<div class="a" style="left:1888px;top:576px;width:32px;height:100px;border:1px solid #c4c4c4;border-right:none;background:#fff"></div>
<div class="a" style="left:1888px;top:609px;width:31px;height:1px;background:#c4c4c4"></div>
<div class="a" style="left:1888px;top:642px;width:31px;height:1px;background:#c4c4c4"></div>
<svg style="left:1894px;top:440px" width="22" height="20" viewBox="0 0 22 20"><path d="M3 14 L9 3 L13 5 L9 14 Z" fill="#888"/><path d="M5 14 L13 4 L17 7 L10 14 Z" fill="#aaa"/><rect x="1.5" y="13" width="19" height="6" rx="1" fill="#fff" stroke="#777" stroke-width="1"/><circle cx="5" cy="16" r="1.5" fill="#666"/><rect x="14" y="13.5" width="6" height="5" fill="#ccc"/></svg>
<svg style="left:1894px;top:473px" width="22" height="20" viewBox="0 0 22 20"><rect x="1" y="1" width="9" height="8" fill="#2a62c8"/><path d="M1 3.7 H10 M1 6.3 H10 M4 1 V9 M7 1 V9" stroke="#fff" stroke-width="0.7"/><path d="M6 9 L13 6 L20 9 V16 L13 19 L6 16 Z M6 9 L13 12 L20 9 M13 12 V19" fill="none" stroke="#222" stroke-width="1.1"/></svg>
<svg style="left:1894px;top:506px" width="22" height="20" viewBox="0 0 22 20"><rect x="1" y="1" width="9" height="8" fill="#333"/><path d="M1 3.7 H10 M1 6.3 H10 M4 1 V9 M7 1 V9" stroke="#fff" stroke-width="0.7"/><path d="M7 9 L13 7 L18 9 V15 L13 17 L7 15 Z" fill="#ddd" stroke="#222" stroke-width="1"/><path d="M4 10 Q2 10 2 13 Q2 15 1 15.5 Q2 16 2 18 Q2 20 4 20 M19 9 Q21 9 21 12 Q21 14 22 14.5" fill="none" stroke="#222" stroke-width="1"/></svg>
<svg style="left:1894px;top:539px" width="22" height="20" viewBox="0 0 22 20"><rect x="1" y="1" width="9" height="8" fill="#333"/><path d="M1 3.7 H10 M1 6.3 H10 M4 1 V9 M7 1 V9" stroke="#fff" stroke-width="0.7"/><text x="4" y="18" font-size="12" font-family="Liberation Serif" font-style="italic" font-weight="bold" fill="#222">(x)</text></svg>
<svg style="left:1892px;top:582px" width="26" height="22" viewBox="0 0 26 22"><rect x="0.5" y="0.5" width="25" height="21" rx="3" fill="#ddd"/><path d="M3 8 H23 V19 H3 Z" fill="#333"/><circle cx="9" cy="13" r="3" fill="#6aa0e8"/><circle cx="17" cy="13" r="3" fill="#6aa0e8"/><path d="M9 3 V8 M13 2 V8 M17 3 V8" stroke="#3a6ec0" stroke-width="1"/><path d="M10 17 Q13 18.5 16 16.5" fill="none" stroke="#fff" stroke-width="0.9"/></svg>
<svg style="left:1892px;top:615px" width="26" height="22" viewBox="0 0 26 22"><rect x="0.5" y="0.5" width="25" height="21" rx="3" fill="#ddd"/><rect x="3" y="3" width="20" height="16" fill="#4caf50"/><path d="M5.5 6 Q9 5 12.5 6.5 V17 Q9 15.5 5.5 16.5 Z M13.5 6.5 Q17 5 20.5 6 V16.5 Q17 15.5 13.5 17 Z" fill="#fff"/></svg>
<svg style="left:1892px;top:648px" width="26" height="22" viewBox="0 0 26 22"><rect x="0.5" y="0.5" width="25" height="21" rx="3" fill="#ddd"/><rect x="3" y="3" width="20" height="16" fill="#1f4fa0"/><path d="M5.5 6 Q9 5 12.5 6.5 V17 Q9 15.5 5.5 16.5 Z M13.5 6.5 Q17 5 20.5 6 V16.5 Q17 15.5 13.5 17 Z" fill="#fff"/></svg>
</body></html>
